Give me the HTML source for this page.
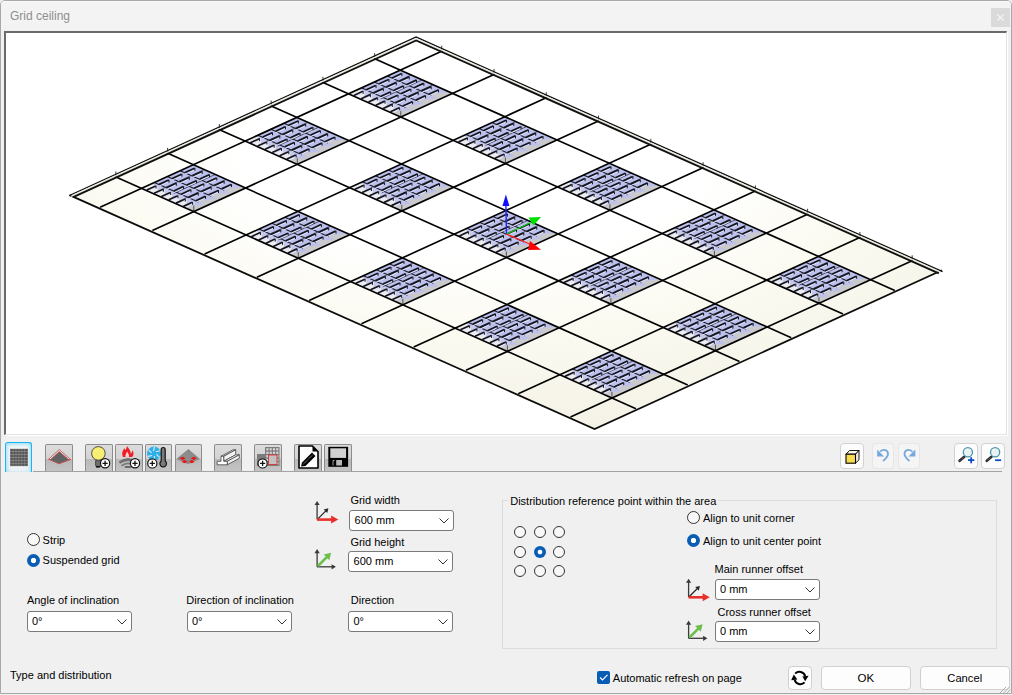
<!DOCTYPE html><html><head><meta charset="utf-8"><style>
html,body{margin:0;padding:0;width:1012px;height:695px;overflow:hidden;background:#f0f0f0;position:relative;font-family:"Liberation Sans",sans-serif}
.t{position:absolute;white-space:nowrap}
#win{position:absolute;left:0;top:0;width:1010px;height:692px;border:1px solid #a8a8a8;border-radius:5px 5px 0 0;background:#f0f0f0}
#title{position:absolute;left:1px;top:1px;width:1010px;height:29px;background:#f3f3f3;border-radius:4px 4px 0 0;border-top:1px solid #fbfbfb;box-sizing:border-box}
#closeb{position:absolute;left:991px;top:8px;width:19px;height:19px;background:#dadada}
#vp{position:absolute;left:4px;top:31px;width:1000px;height:401px;background:#fff;border-top:2px solid #6a6a6a;border-left:2px solid #6a6a6a;border-right:1px solid #e3e3e3;border-bottom:1px solid #e3e3e3;box-shadow:1px 1px 0 #fff}
#tbline{position:absolute;left:33px;top:471px;width:969px;height:1px;background:#a3a3a3}
.tab{position:absolute;left:5px;top:442px;width:24.5px;height:29px;border:1.6px solid #1ab4f0;border-bottom:none;border-radius:3px 3px 0 0;background:linear-gradient(#f4f8fa,#eef2f4);box-shadow:inset 2px 2px 3px rgba(80,200,245,0.35),inset -2px 0 3px rgba(80,200,245,0.35)}
.tbtn{position:absolute;top:444px;height:26px;border:1px solid #8c8c8c;border-bottom:none;border-radius:2px 2px 0 0;background:linear-gradient(#dcdcdc 0,#d3d3d3 52%,#b8b8b8 53%,#c4c4c4 100%)}
.rbtn{position:absolute;top:443px;height:24px;border:1px solid #d2d2d2;border-radius:4px;background:#fcfcfc}
.rbtn.faded{border-color:#e6e6e6;background:#f5f5f5}
.rad{position:absolute;border:1px solid #333;border-radius:50%;background:#f8f8f8;box-sizing:content-box}
.rad.on{border:none;background:radial-gradient(circle,#fff 0,#fff 2.6px,#0a5db5 3.2px)}
.combo{position:absolute;border:1px solid #7a7a7a;border-radius:3px;background:#fff}
#grp{position:absolute;left:502px;top:500px;width:493px;height:147px;border:1px solid #dcdcdc}
#grplegend{position:absolute;left:508px;top:496px;width:210px;height:8px;background:#f0f0f0}
#chk{position:absolute;left:597px;top:671px;width:13px;height:13px;background:#0a5db5;border-radius:2px}
.pbtn{position:absolute;top:666px;height:22px;border:1px solid #d0d0d0;border-radius:4px;background:#fdfdfd}
</style></head><body><div id="win"></div><div id="title"></div><div class="t" style="left:10.00px;top:8.64px;font-size:12px;line-height:15px;color:#8e8e8e;">Grid ceiling</div><div id="closeb"><svg width="19" height="19" style="position:absolute;left:0;top:0"><path d="M6.3 6.3 L12.7 12.7 M12.7 6.3 L6.3 12.7" stroke="#f6f6f6" stroke-width="1.2"/></svg></div><div id="vp"></div><svg width="1012" height="695" viewBox="0 0 1012 695" style="position:absolute;left:0;top:0"><defs><radialGradient id="fillg" gradientUnits="userSpaceOnUse" cx="2.5" cy="1.0" r="8.6"><stop offset="0" stop-color="#ffffff"/><stop offset="0.36" stop-color="#ffffff"/><stop offset="0.64" stop-color="#fbfaf1"/><stop offset="1" stop-color="#f4f2e6"/></radialGradient></defs><g transform="matrix(52.27,23.29,-51.76,23.66,400.3,70.1)"><polygon points="-0.56,-0.87 9.51,-0.87 9.51,5.85 -0.56,5.85" fill="url(#fillg)"/></g><polygon points="400.30,70.10 452.57,93.39 400.81,117.05 348.54,93.76" fill="#bcc0ec"/><polygon points="358.89,89.03 411.16,112.32 400.81,117.05 348.54,93.76" fill="#ededed"/><polygon points="364.53,91.54 370.02,93.98 364.32,96.59" fill="#c4c7ef"/><polygon points="371.84,94.80 377.33,97.24 371.64,99.85" fill="#c4c7ef"/><polygon points="379.16,98.06 384.65,100.51 378.96,103.11" fill="#c4c7ef"/><polygon points="386.48,101.32 391.97,103.77 386.27,106.37" fill="#c4c7ef"/><polygon points="393.80,104.58 399.29,107.03 393.59,109.63" fill="#c4c7ef"/><polygon points="401.12,107.84 406.60,110.29 400.91,112.89" fill="#c4c7ef"/><polygon points="444.21,89.66 452.57,93.39 400.81,117.05 392.45,113.32" fill="#cacacc"/><polygon points="443.95,89.55 435.15,93.57 449.96,92.23" fill="#bcc0ec"/><polygon points="431.01,95.46 422.21,99.48 437.02,98.14" fill="#bcc0ec"/><polygon points="418.07,101.38 409.27,105.40 424.08,104.06" fill="#bcc0ec"/><polygon points="405.13,107.29 396.33,111.31 411.14,109.97" fill="#bcc0ec"/><line x1="387.36" y1="76.02" x2="431.27" y2="95.58" stroke="#1e1e28" stroke-width="1.1"/><line x1="374.42" y1="81.93" x2="418.33" y2="101.49" stroke="#1e1e28" stroke-width="1.1"/><line x1="361.48" y1="87.84" x2="405.39" y2="107.41" stroke="#1e1e28" stroke-width="1.1"/><line x1="411.28" y1="74.99" x2="369.87" y2="93.92" stroke="#2a2a36" stroke-width="0.7"/><line x1="422.25" y1="79.88" x2="380.85" y2="98.81" stroke="#2a2a36" stroke-width="0.7"/><line x1="433.23" y1="84.77" x2="391.82" y2="103.70" stroke="#2a2a36" stroke-width="0.7"/><line x1="401.60" y1="75.10" x2="392.16" y2="79.42" stroke="#e2e5ff" stroke-width="1.1"/><line x1="401.60" y1="73.60" x2="392.16" y2="77.92" stroke="#14141c" stroke-width="1.7"/><line x1="401.90" y1="73.20" x2="401.90" y2="76.10" stroke="#14141c" stroke-width="1.0"/><line x1="388.66" y1="81.02" x2="379.22" y2="85.33" stroke="#e2e5ff" stroke-width="1.1"/><line x1="388.66" y1="79.52" x2="379.22" y2="83.83" stroke="#14141c" stroke-width="1.7"/><line x1="388.96" y1="79.12" x2="388.96" y2="82.02" stroke="#14141c" stroke-width="1.0"/><line x1="375.72" y1="86.93" x2="366.28" y2="91.25" stroke="#e2e5ff" stroke-width="1.1"/><line x1="375.72" y1="85.43" x2="366.28" y2="89.75" stroke="#14141c" stroke-width="1.7"/><line x1="376.02" y1="85.03" x2="376.02" y2="87.93" stroke="#14141c" stroke-width="1.0"/><line x1="362.78" y1="92.85" x2="353.85" y2="96.93" stroke="#e2e5ff" stroke-width="1.1"/><line x1="362.78" y1="91.35" x2="353.85" y2="95.43" stroke="#14141c" stroke-width="1.7"/><line x1="363.08" y1="90.95" x2="363.08" y2="93.85" stroke="#14141c" stroke-width="1.0"/><line x1="408.92" y1="78.36" x2="399.47" y2="82.68" stroke="#e2e5ff" stroke-width="1.1"/><line x1="408.92" y1="76.86" x2="399.47" y2="81.18" stroke="#14141c" stroke-width="1.7"/><line x1="409.22" y1="76.46" x2="409.22" y2="79.36" stroke="#14141c" stroke-width="1.0"/><line x1="395.98" y1="84.28" x2="386.53" y2="88.59" stroke="#e2e5ff" stroke-width="1.1"/><line x1="395.98" y1="82.78" x2="386.53" y2="87.09" stroke="#14141c" stroke-width="1.7"/><line x1="396.28" y1="82.38" x2="396.28" y2="85.28" stroke="#14141c" stroke-width="1.0"/><line x1="383.04" y1="90.19" x2="373.59" y2="94.51" stroke="#e2e5ff" stroke-width="1.1"/><line x1="383.04" y1="88.69" x2="373.59" y2="93.01" stroke="#14141c" stroke-width="1.7"/><line x1="383.34" y1="88.29" x2="383.34" y2="91.19" stroke="#14141c" stroke-width="1.0"/><line x1="370.10" y1="96.11" x2="361.17" y2="100.19" stroke="#e2e5ff" stroke-width="1.1"/><line x1="370.10" y1="94.61" x2="361.17" y2="98.69" stroke="#14141c" stroke-width="1.7"/><line x1="370.40" y1="94.21" x2="370.40" y2="97.11" stroke="#14141c" stroke-width="1.0"/><line x1="416.24" y1="81.62" x2="406.79" y2="85.94" stroke="#e2e5ff" stroke-width="1.1"/><line x1="416.24" y1="80.12" x2="406.79" y2="84.44" stroke="#14141c" stroke-width="1.7"/><line x1="416.54" y1="79.72" x2="416.54" y2="82.62" stroke="#14141c" stroke-width="1.0"/><line x1="403.30" y1="87.54" x2="393.85" y2="91.85" stroke="#e2e5ff" stroke-width="1.1"/><line x1="403.30" y1="86.04" x2="393.85" y2="90.35" stroke="#14141c" stroke-width="1.7"/><line x1="403.60" y1="85.64" x2="403.60" y2="88.54" stroke="#14141c" stroke-width="1.0"/><line x1="390.36" y1="93.45" x2="380.91" y2="97.77" stroke="#e2e5ff" stroke-width="1.1"/><line x1="390.36" y1="91.95" x2="380.91" y2="96.27" stroke="#14141c" stroke-width="1.7"/><line x1="390.66" y1="91.55" x2="390.66" y2="94.45" stroke="#14141c" stroke-width="1.0"/><line x1="377.42" y1="99.37" x2="368.49" y2="103.45" stroke="#e2e5ff" stroke-width="1.1"/><line x1="377.42" y1="97.87" x2="368.49" y2="101.95" stroke="#14141c" stroke-width="1.7"/><line x1="377.72" y1="97.47" x2="377.72" y2="100.37" stroke="#14141c" stroke-width="1.0"/><line x1="423.56" y1="84.88" x2="414.11" y2="89.20" stroke="#e2e5ff" stroke-width="1.1"/><line x1="423.56" y1="83.38" x2="414.11" y2="87.70" stroke="#14141c" stroke-width="1.7"/><line x1="423.86" y1="82.98" x2="423.86" y2="85.88" stroke="#14141c" stroke-width="1.0"/><line x1="410.62" y1="90.80" x2="401.17" y2="95.12" stroke="#e2e5ff" stroke-width="1.1"/><line x1="410.62" y1="89.30" x2="401.17" y2="93.62" stroke="#14141c" stroke-width="1.7"/><line x1="410.92" y1="88.90" x2="410.92" y2="91.80" stroke="#14141c" stroke-width="1.0"/><line x1="397.68" y1="96.71" x2="388.23" y2="101.03" stroke="#e2e5ff" stroke-width="1.1"/><line x1="397.68" y1="95.21" x2="388.23" y2="99.53" stroke="#14141c" stroke-width="1.7"/><line x1="397.98" y1="94.81" x2="397.98" y2="97.71" stroke="#14141c" stroke-width="1.0"/><line x1="384.74" y1="102.63" x2="375.81" y2="106.71" stroke="#e2e5ff" stroke-width="1.1"/><line x1="384.74" y1="101.13" x2="375.81" y2="105.21" stroke="#14141c" stroke-width="1.7"/><line x1="385.04" y1="100.73" x2="385.04" y2="103.63" stroke="#14141c" stroke-width="1.0"/><line x1="430.87" y1="88.14" x2="421.43" y2="92.46" stroke="#e2e5ff" stroke-width="1.1"/><line x1="430.87" y1="86.64" x2="421.43" y2="90.96" stroke="#14141c" stroke-width="1.7"/><line x1="431.17" y1="86.24" x2="431.17" y2="89.14" stroke="#14141c" stroke-width="1.0"/><line x1="417.93" y1="94.06" x2="408.49" y2="98.38" stroke="#e2e5ff" stroke-width="1.1"/><line x1="417.93" y1="92.56" x2="408.49" y2="96.88" stroke="#14141c" stroke-width="1.7"/><line x1="418.23" y1="92.16" x2="418.23" y2="95.06" stroke="#14141c" stroke-width="1.0"/><line x1="404.99" y1="99.97" x2="395.55" y2="104.29" stroke="#e2e5ff" stroke-width="1.1"/><line x1="404.99" y1="98.47" x2="395.55" y2="102.79" stroke="#14141c" stroke-width="1.7"/><line x1="405.29" y1="98.07" x2="405.29" y2="100.97" stroke="#14141c" stroke-width="1.0"/><line x1="392.05" y1="105.89" x2="383.12" y2="109.97" stroke="#e2e5ff" stroke-width="1.1"/><line x1="392.05" y1="104.39" x2="383.12" y2="108.47" stroke="#14141c" stroke-width="1.7"/><line x1="392.35" y1="103.99" x2="392.35" y2="106.89" stroke="#14141c" stroke-width="1.0"/><line x1="438.19" y1="91.40" x2="428.74" y2="95.72" stroke="#e2e5ff" stroke-width="1.1"/><line x1="438.19" y1="89.90" x2="428.74" y2="94.22" stroke="#14141c" stroke-width="1.7"/><line x1="438.49" y1="89.50" x2="438.49" y2="92.40" stroke="#14141c" stroke-width="1.0"/><line x1="425.25" y1="97.32" x2="415.80" y2="101.64" stroke="#e2e5ff" stroke-width="1.1"/><line x1="425.25" y1="95.82" x2="415.80" y2="100.14" stroke="#14141c" stroke-width="1.7"/><line x1="425.55" y1="95.42" x2="425.55" y2="98.32" stroke="#14141c" stroke-width="1.0"/><line x1="412.31" y1="103.23" x2="402.86" y2="107.55" stroke="#e2e5ff" stroke-width="1.1"/><line x1="412.31" y1="101.73" x2="402.86" y2="106.05" stroke="#14141c" stroke-width="1.7"/><line x1="412.61" y1="101.33" x2="412.61" y2="104.23" stroke="#14141c" stroke-width="1.0"/><line x1="399.37" y1="109.15" x2="390.44" y2="113.23" stroke="#e2e5ff" stroke-width="1.1"/><line x1="399.37" y1="107.65" x2="390.44" y2="111.73" stroke="#14141c" stroke-width="1.7"/><line x1="399.67" y1="107.25" x2="399.67" y2="110.15" stroke="#14141c" stroke-width="1.0"/><line x1="400.81" y1="117.05" x2="400.81" y2="111.05" stroke="#444" stroke-width="0.9"/><polygon points="296.78,117.42 349.05,140.71 297.29,164.37 245.02,141.08" fill="#bcc0ec"/><polygon points="255.37,136.35 307.64,159.64 297.29,164.37 245.02,141.08" fill="#ededed"/><polygon points="261.01,138.86 266.50,141.30 260.80,143.91" fill="#c4c7ef"/><polygon points="268.32,142.12 273.81,144.56 268.12,147.17" fill="#c4c7ef"/><polygon points="275.64,145.38 281.13,147.83 275.44,150.43" fill="#c4c7ef"/><polygon points="282.96,148.64 288.45,151.09 282.75,153.69" fill="#c4c7ef"/><polygon points="290.28,151.90 295.77,154.35 290.07,156.95" fill="#c4c7ef"/><polygon points="297.60,155.16 303.08,157.61 297.39,160.21" fill="#c4c7ef"/><polygon points="340.69,136.98 349.05,140.71 297.29,164.37 288.93,160.64" fill="#cacacc"/><polygon points="340.43,136.87 331.63,140.89 346.44,139.55" fill="#bcc0ec"/><polygon points="327.49,142.78 318.69,146.80 333.50,145.46" fill="#bcc0ec"/><polygon points="314.55,148.70 305.75,152.72 320.56,151.38" fill="#bcc0ec"/><polygon points="301.61,154.61 292.81,158.63 307.62,157.29" fill="#bcc0ec"/><line x1="283.84" y1="123.33" x2="327.75" y2="142.90" stroke="#1e1e28" stroke-width="1.1"/><line x1="270.90" y1="129.25" x2="314.81" y2="148.81" stroke="#1e1e28" stroke-width="1.1"/><line x1="257.96" y1="135.16" x2="301.87" y2="154.73" stroke="#1e1e28" stroke-width="1.1"/><line x1="307.76" y1="122.31" x2="266.35" y2="141.24" stroke="#2a2a36" stroke-width="0.7"/><line x1="318.73" y1="127.20" x2="277.33" y2="146.13" stroke="#2a2a36" stroke-width="0.7"/><line x1="329.71" y1="132.09" x2="288.30" y2="151.02" stroke="#2a2a36" stroke-width="0.7"/><line x1="298.08" y1="122.42" x2="288.64" y2="126.74" stroke="#e2e5ff" stroke-width="1.1"/><line x1="298.08" y1="120.92" x2="288.64" y2="125.24" stroke="#14141c" stroke-width="1.7"/><line x1="298.38" y1="120.52" x2="298.38" y2="123.42" stroke="#14141c" stroke-width="1.0"/><line x1="285.14" y1="128.34" x2="275.70" y2="132.65" stroke="#e2e5ff" stroke-width="1.1"/><line x1="285.14" y1="126.84" x2="275.70" y2="131.15" stroke="#14141c" stroke-width="1.7"/><line x1="285.44" y1="126.44" x2="285.44" y2="129.34" stroke="#14141c" stroke-width="1.0"/><line x1="272.20" y1="134.25" x2="262.76" y2="138.57" stroke="#e2e5ff" stroke-width="1.1"/><line x1="272.20" y1="132.75" x2="262.76" y2="137.07" stroke="#14141c" stroke-width="1.7"/><line x1="272.50" y1="132.35" x2="272.50" y2="135.25" stroke="#14141c" stroke-width="1.0"/><line x1="259.26" y1="140.17" x2="250.33" y2="144.25" stroke="#e2e5ff" stroke-width="1.1"/><line x1="259.26" y1="138.67" x2="250.33" y2="142.75" stroke="#14141c" stroke-width="1.7"/><line x1="259.56" y1="138.27" x2="259.56" y2="141.17" stroke="#14141c" stroke-width="1.0"/><line x1="305.40" y1="125.68" x2="295.95" y2="130.00" stroke="#e2e5ff" stroke-width="1.1"/><line x1="305.40" y1="124.18" x2="295.95" y2="128.50" stroke="#14141c" stroke-width="1.7"/><line x1="305.70" y1="123.78" x2="305.70" y2="126.68" stroke="#14141c" stroke-width="1.0"/><line x1="292.46" y1="131.60" x2="283.01" y2="135.91" stroke="#e2e5ff" stroke-width="1.1"/><line x1="292.46" y1="130.10" x2="283.01" y2="134.41" stroke="#14141c" stroke-width="1.7"/><line x1="292.76" y1="129.70" x2="292.76" y2="132.60" stroke="#14141c" stroke-width="1.0"/><line x1="279.52" y1="137.51" x2="270.07" y2="141.83" stroke="#e2e5ff" stroke-width="1.1"/><line x1="279.52" y1="136.01" x2="270.07" y2="140.33" stroke="#14141c" stroke-width="1.7"/><line x1="279.82" y1="135.61" x2="279.82" y2="138.51" stroke="#14141c" stroke-width="1.0"/><line x1="266.58" y1="143.43" x2="257.65" y2="147.51" stroke="#e2e5ff" stroke-width="1.1"/><line x1="266.58" y1="141.93" x2="257.65" y2="146.01" stroke="#14141c" stroke-width="1.7"/><line x1="266.88" y1="141.53" x2="266.88" y2="144.43" stroke="#14141c" stroke-width="1.0"/><line x1="312.72" y1="128.94" x2="303.27" y2="133.26" stroke="#e2e5ff" stroke-width="1.1"/><line x1="312.72" y1="127.44" x2="303.27" y2="131.76" stroke="#14141c" stroke-width="1.7"/><line x1="313.02" y1="127.04" x2="313.02" y2="129.94" stroke="#14141c" stroke-width="1.0"/><line x1="299.78" y1="134.86" x2="290.33" y2="139.17" stroke="#e2e5ff" stroke-width="1.1"/><line x1="299.78" y1="133.36" x2="290.33" y2="137.67" stroke="#14141c" stroke-width="1.7"/><line x1="300.08" y1="132.96" x2="300.08" y2="135.86" stroke="#14141c" stroke-width="1.0"/><line x1="286.84" y1="140.77" x2="277.39" y2="145.09" stroke="#e2e5ff" stroke-width="1.1"/><line x1="286.84" y1="139.27" x2="277.39" y2="143.59" stroke="#14141c" stroke-width="1.7"/><line x1="287.14" y1="138.87" x2="287.14" y2="141.77" stroke="#14141c" stroke-width="1.0"/><line x1="273.90" y1="146.69" x2="264.97" y2="150.77" stroke="#e2e5ff" stroke-width="1.1"/><line x1="273.90" y1="145.19" x2="264.97" y2="149.27" stroke="#14141c" stroke-width="1.7"/><line x1="274.20" y1="144.79" x2="274.20" y2="147.69" stroke="#14141c" stroke-width="1.0"/><line x1="320.04" y1="132.20" x2="310.59" y2="136.52" stroke="#e2e5ff" stroke-width="1.1"/><line x1="320.04" y1="130.70" x2="310.59" y2="135.02" stroke="#14141c" stroke-width="1.7"/><line x1="320.34" y1="130.30" x2="320.34" y2="133.20" stroke="#14141c" stroke-width="1.0"/><line x1="307.10" y1="138.12" x2="297.65" y2="142.44" stroke="#e2e5ff" stroke-width="1.1"/><line x1="307.10" y1="136.62" x2="297.65" y2="140.94" stroke="#14141c" stroke-width="1.7"/><line x1="307.40" y1="136.22" x2="307.40" y2="139.12" stroke="#14141c" stroke-width="1.0"/><line x1="294.16" y1="144.03" x2="284.71" y2="148.35" stroke="#e2e5ff" stroke-width="1.1"/><line x1="294.16" y1="142.53" x2="284.71" y2="146.85" stroke="#14141c" stroke-width="1.7"/><line x1="294.46" y1="142.13" x2="294.46" y2="145.03" stroke="#14141c" stroke-width="1.0"/><line x1="281.22" y1="149.95" x2="272.29" y2="154.03" stroke="#e2e5ff" stroke-width="1.1"/><line x1="281.22" y1="148.45" x2="272.29" y2="152.53" stroke="#14141c" stroke-width="1.7"/><line x1="281.52" y1="148.05" x2="281.52" y2="150.95" stroke="#14141c" stroke-width="1.0"/><line x1="327.35" y1="135.46" x2="317.91" y2="139.78" stroke="#e2e5ff" stroke-width="1.1"/><line x1="327.35" y1="133.96" x2="317.91" y2="138.28" stroke="#14141c" stroke-width="1.7"/><line x1="327.65" y1="133.56" x2="327.65" y2="136.46" stroke="#14141c" stroke-width="1.0"/><line x1="314.41" y1="141.38" x2="304.97" y2="145.70" stroke="#e2e5ff" stroke-width="1.1"/><line x1="314.41" y1="139.88" x2="304.97" y2="144.20" stroke="#14141c" stroke-width="1.7"/><line x1="314.71" y1="139.48" x2="314.71" y2="142.38" stroke="#14141c" stroke-width="1.0"/><line x1="301.47" y1="147.29" x2="292.03" y2="151.61" stroke="#e2e5ff" stroke-width="1.1"/><line x1="301.47" y1="145.79" x2="292.03" y2="150.11" stroke="#14141c" stroke-width="1.7"/><line x1="301.77" y1="145.39" x2="301.77" y2="148.29" stroke="#14141c" stroke-width="1.0"/><line x1="288.53" y1="153.21" x2="279.60" y2="157.29" stroke="#e2e5ff" stroke-width="1.1"/><line x1="288.53" y1="151.71" x2="279.60" y2="155.79" stroke="#14141c" stroke-width="1.7"/><line x1="288.83" y1="151.31" x2="288.83" y2="154.21" stroke="#14141c" stroke-width="1.0"/><line x1="334.67" y1="138.72" x2="325.22" y2="143.04" stroke="#e2e5ff" stroke-width="1.1"/><line x1="334.67" y1="137.22" x2="325.22" y2="141.54" stroke="#14141c" stroke-width="1.7"/><line x1="334.97" y1="136.82" x2="334.97" y2="139.72" stroke="#14141c" stroke-width="1.0"/><line x1="321.73" y1="144.64" x2="312.28" y2="148.96" stroke="#e2e5ff" stroke-width="1.1"/><line x1="321.73" y1="143.14" x2="312.28" y2="147.46" stroke="#14141c" stroke-width="1.7"/><line x1="322.03" y1="142.74" x2="322.03" y2="145.64" stroke="#14141c" stroke-width="1.0"/><line x1="308.79" y1="150.55" x2="299.34" y2="154.87" stroke="#e2e5ff" stroke-width="1.1"/><line x1="308.79" y1="149.05" x2="299.34" y2="153.37" stroke="#14141c" stroke-width="1.7"/><line x1="309.09" y1="148.65" x2="309.09" y2="151.55" stroke="#14141c" stroke-width="1.0"/><line x1="295.85" y1="156.47" x2="286.92" y2="160.55" stroke="#e2e5ff" stroke-width="1.1"/><line x1="295.85" y1="154.97" x2="286.92" y2="159.05" stroke="#14141c" stroke-width="1.7"/><line x1="296.15" y1="154.57" x2="296.15" y2="157.47" stroke="#14141c" stroke-width="1.0"/><line x1="297.29" y1="164.37" x2="297.29" y2="158.37" stroke="#444" stroke-width="0.9"/><polygon points="193.26,164.74 245.53,188.03 193.77,211.69 141.50,188.40" fill="#bcc0ec"/><polygon points="151.85,183.67 204.12,206.96 193.77,211.69 141.50,188.40" fill="#ededed"/><polygon points="157.49,186.18 162.98,188.62 157.28,191.23" fill="#c4c7ef"/><polygon points="164.80,189.44 170.29,191.88 164.60,194.49" fill="#c4c7ef"/><polygon points="172.12,192.70 177.61,195.15 171.92,197.75" fill="#c4c7ef"/><polygon points="179.44,195.96 184.93,198.41 179.23,201.01" fill="#c4c7ef"/><polygon points="186.76,199.22 192.25,201.67 186.55,204.27" fill="#c4c7ef"/><polygon points="194.08,202.48 199.56,204.93 193.87,207.53" fill="#c4c7ef"/><polygon points="237.17,184.30 245.53,188.03 193.77,211.69 185.41,207.96" fill="#cacacc"/><polygon points="236.91,184.19 228.11,188.21 242.92,186.87" fill="#bcc0ec"/><polygon points="223.97,190.10 215.17,194.12 229.98,192.78" fill="#bcc0ec"/><polygon points="211.03,196.02 202.23,200.04 217.04,198.70" fill="#bcc0ec"/><polygon points="198.09,201.93 189.29,205.95 204.10,204.61" fill="#bcc0ec"/><line x1="180.32" y1="170.66" x2="224.23" y2="190.22" stroke="#1e1e28" stroke-width="1.1"/><line x1="167.38" y1="176.57" x2="211.29" y2="196.13" stroke="#1e1e28" stroke-width="1.1"/><line x1="154.44" y1="182.49" x2="198.35" y2="202.05" stroke="#1e1e28" stroke-width="1.1"/><line x1="204.24" y1="169.63" x2="162.83" y2="188.56" stroke="#2a2a36" stroke-width="0.7"/><line x1="215.21" y1="174.52" x2="173.81" y2="193.45" stroke="#2a2a36" stroke-width="0.7"/><line x1="226.19" y1="179.41" x2="184.78" y2="198.34" stroke="#2a2a36" stroke-width="0.7"/><line x1="194.56" y1="169.74" x2="185.12" y2="174.06" stroke="#e2e5ff" stroke-width="1.1"/><line x1="194.56" y1="168.24" x2="185.12" y2="172.56" stroke="#14141c" stroke-width="1.7"/><line x1="194.86" y1="167.84" x2="194.86" y2="170.74" stroke="#14141c" stroke-width="1.0"/><line x1="181.62" y1="175.66" x2="172.18" y2="179.97" stroke="#e2e5ff" stroke-width="1.1"/><line x1="181.62" y1="174.16" x2="172.18" y2="178.47" stroke="#14141c" stroke-width="1.7"/><line x1="181.92" y1="173.76" x2="181.92" y2="176.66" stroke="#14141c" stroke-width="1.0"/><line x1="168.68" y1="181.57" x2="159.24" y2="185.89" stroke="#e2e5ff" stroke-width="1.1"/><line x1="168.68" y1="180.07" x2="159.24" y2="184.39" stroke="#14141c" stroke-width="1.7"/><line x1="168.98" y1="179.67" x2="168.98" y2="182.57" stroke="#14141c" stroke-width="1.0"/><line x1="155.74" y1="187.49" x2="146.81" y2="191.57" stroke="#e2e5ff" stroke-width="1.1"/><line x1="155.74" y1="185.99" x2="146.81" y2="190.07" stroke="#14141c" stroke-width="1.7"/><line x1="156.04" y1="185.59" x2="156.04" y2="188.49" stroke="#14141c" stroke-width="1.0"/><line x1="201.88" y1="173.00" x2="192.43" y2="177.32" stroke="#e2e5ff" stroke-width="1.1"/><line x1="201.88" y1="171.50" x2="192.43" y2="175.82" stroke="#14141c" stroke-width="1.7"/><line x1="202.18" y1="171.10" x2="202.18" y2="174.00" stroke="#14141c" stroke-width="1.0"/><line x1="188.94" y1="178.92" x2="179.49" y2="183.23" stroke="#e2e5ff" stroke-width="1.1"/><line x1="188.94" y1="177.42" x2="179.49" y2="181.73" stroke="#14141c" stroke-width="1.7"/><line x1="189.24" y1="177.02" x2="189.24" y2="179.92" stroke="#14141c" stroke-width="1.0"/><line x1="176.00" y1="184.83" x2="166.55" y2="189.15" stroke="#e2e5ff" stroke-width="1.1"/><line x1="176.00" y1="183.33" x2="166.55" y2="187.65" stroke="#14141c" stroke-width="1.7"/><line x1="176.30" y1="182.93" x2="176.30" y2="185.83" stroke="#14141c" stroke-width="1.0"/><line x1="163.06" y1="190.75" x2="154.13" y2="194.83" stroke="#e2e5ff" stroke-width="1.1"/><line x1="163.06" y1="189.25" x2="154.13" y2="193.33" stroke="#14141c" stroke-width="1.7"/><line x1="163.36" y1="188.85" x2="163.36" y2="191.75" stroke="#14141c" stroke-width="1.0"/><line x1="209.20" y1="176.26" x2="199.75" y2="180.58" stroke="#e2e5ff" stroke-width="1.1"/><line x1="209.20" y1="174.76" x2="199.75" y2="179.08" stroke="#14141c" stroke-width="1.7"/><line x1="209.50" y1="174.36" x2="209.50" y2="177.26" stroke="#14141c" stroke-width="1.0"/><line x1="196.26" y1="182.18" x2="186.81" y2="186.49" stroke="#e2e5ff" stroke-width="1.1"/><line x1="196.26" y1="180.68" x2="186.81" y2="184.99" stroke="#14141c" stroke-width="1.7"/><line x1="196.56" y1="180.28" x2="196.56" y2="183.18" stroke="#14141c" stroke-width="1.0"/><line x1="183.32" y1="188.09" x2="173.87" y2="192.41" stroke="#e2e5ff" stroke-width="1.1"/><line x1="183.32" y1="186.59" x2="173.87" y2="190.91" stroke="#14141c" stroke-width="1.7"/><line x1="183.62" y1="186.19" x2="183.62" y2="189.09" stroke="#14141c" stroke-width="1.0"/><line x1="170.38" y1="194.01" x2="161.45" y2="198.09" stroke="#e2e5ff" stroke-width="1.1"/><line x1="170.38" y1="192.51" x2="161.45" y2="196.59" stroke="#14141c" stroke-width="1.7"/><line x1="170.68" y1="192.11" x2="170.68" y2="195.01" stroke="#14141c" stroke-width="1.0"/><line x1="216.52" y1="179.52" x2="207.07" y2="183.84" stroke="#e2e5ff" stroke-width="1.1"/><line x1="216.52" y1="178.02" x2="207.07" y2="182.34" stroke="#14141c" stroke-width="1.7"/><line x1="216.82" y1="177.62" x2="216.82" y2="180.52" stroke="#14141c" stroke-width="1.0"/><line x1="203.58" y1="185.44" x2="194.13" y2="189.76" stroke="#e2e5ff" stroke-width="1.1"/><line x1="203.58" y1="183.94" x2="194.13" y2="188.26" stroke="#14141c" stroke-width="1.7"/><line x1="203.88" y1="183.54" x2="203.88" y2="186.44" stroke="#14141c" stroke-width="1.0"/><line x1="190.64" y1="191.35" x2="181.19" y2="195.67" stroke="#e2e5ff" stroke-width="1.1"/><line x1="190.64" y1="189.85" x2="181.19" y2="194.17" stroke="#14141c" stroke-width="1.7"/><line x1="190.94" y1="189.45" x2="190.94" y2="192.35" stroke="#14141c" stroke-width="1.0"/><line x1="177.70" y1="197.27" x2="168.77" y2="201.35" stroke="#e2e5ff" stroke-width="1.1"/><line x1="177.70" y1="195.77" x2="168.77" y2="199.85" stroke="#14141c" stroke-width="1.7"/><line x1="178.00" y1="195.37" x2="178.00" y2="198.27" stroke="#14141c" stroke-width="1.0"/><line x1="223.83" y1="182.78" x2="214.39" y2="187.10" stroke="#e2e5ff" stroke-width="1.1"/><line x1="223.83" y1="181.28" x2="214.39" y2="185.60" stroke="#14141c" stroke-width="1.7"/><line x1="224.13" y1="180.88" x2="224.13" y2="183.78" stroke="#14141c" stroke-width="1.0"/><line x1="210.89" y1="188.70" x2="201.45" y2="193.02" stroke="#e2e5ff" stroke-width="1.1"/><line x1="210.89" y1="187.20" x2="201.45" y2="191.52" stroke="#14141c" stroke-width="1.7"/><line x1="211.19" y1="186.80" x2="211.19" y2="189.70" stroke="#14141c" stroke-width="1.0"/><line x1="197.95" y1="194.61" x2="188.51" y2="198.93" stroke="#e2e5ff" stroke-width="1.1"/><line x1="197.95" y1="193.11" x2="188.51" y2="197.43" stroke="#14141c" stroke-width="1.7"/><line x1="198.25" y1="192.71" x2="198.25" y2="195.61" stroke="#14141c" stroke-width="1.0"/><line x1="185.01" y1="200.53" x2="176.08" y2="204.61" stroke="#e2e5ff" stroke-width="1.1"/><line x1="185.01" y1="199.03" x2="176.08" y2="203.11" stroke="#14141c" stroke-width="1.7"/><line x1="185.31" y1="198.63" x2="185.31" y2="201.53" stroke="#14141c" stroke-width="1.0"/><line x1="231.15" y1="186.04" x2="221.70" y2="190.36" stroke="#e2e5ff" stroke-width="1.1"/><line x1="231.15" y1="184.54" x2="221.70" y2="188.86" stroke="#14141c" stroke-width="1.7"/><line x1="231.45" y1="184.14" x2="231.45" y2="187.04" stroke="#14141c" stroke-width="1.0"/><line x1="218.21" y1="191.96" x2="208.76" y2="196.28" stroke="#e2e5ff" stroke-width="1.1"/><line x1="218.21" y1="190.46" x2="208.76" y2="194.78" stroke="#14141c" stroke-width="1.7"/><line x1="218.51" y1="190.06" x2="218.51" y2="192.96" stroke="#14141c" stroke-width="1.0"/><line x1="205.27" y1="197.87" x2="195.82" y2="202.19" stroke="#e2e5ff" stroke-width="1.1"/><line x1="205.27" y1="196.37" x2="195.82" y2="200.69" stroke="#14141c" stroke-width="1.7"/><line x1="205.57" y1="195.97" x2="205.57" y2="198.87" stroke="#14141c" stroke-width="1.0"/><line x1="192.33" y1="203.79" x2="183.40" y2="207.87" stroke="#e2e5ff" stroke-width="1.1"/><line x1="192.33" y1="202.29" x2="183.40" y2="206.37" stroke="#14141c" stroke-width="1.7"/><line x1="192.63" y1="201.89" x2="192.63" y2="204.79" stroke="#14141c" stroke-width="1.0"/><line x1="193.77" y1="211.69" x2="193.77" y2="205.69" stroke="#444" stroke-width="0.9"/><polygon points="504.84,116.68 557.11,139.97 505.35,163.63 453.08,140.34" fill="#bcc0ec"/><polygon points="463.43,135.61 515.70,158.90 505.35,163.63 453.08,140.34" fill="#ededed"/><polygon points="469.07,138.12 474.56,140.56 468.86,143.17" fill="#c4c7ef"/><polygon points="476.38,141.38 481.87,143.82 476.18,146.43" fill="#c4c7ef"/><polygon points="483.70,144.64 489.19,147.09 483.50,149.69" fill="#c4c7ef"/><polygon points="491.02,147.90 496.51,150.35 490.81,152.95" fill="#c4c7ef"/><polygon points="498.34,151.16 503.83,153.61 498.13,156.21" fill="#c4c7ef"/><polygon points="505.66,154.42 511.14,156.87 505.45,159.47" fill="#c4c7ef"/><polygon points="548.75,136.24 557.11,139.97 505.35,163.63 496.99,159.90" fill="#cacacc"/><polygon points="548.49,136.13 539.69,140.15 554.50,138.81" fill="#bcc0ec"/><polygon points="535.55,142.04 526.75,146.06 541.56,144.72" fill="#bcc0ec"/><polygon points="522.61,147.96 513.81,151.98 528.62,150.64" fill="#bcc0ec"/><polygon points="509.67,153.87 500.87,157.89 515.68,156.55" fill="#bcc0ec"/><line x1="491.90" y1="122.59" x2="535.81" y2="142.16" stroke="#1e1e28" stroke-width="1.1"/><line x1="478.96" y1="128.51" x2="522.87" y2="148.07" stroke="#1e1e28" stroke-width="1.1"/><line x1="466.02" y1="134.42" x2="509.93" y2="153.99" stroke="#1e1e28" stroke-width="1.1"/><line x1="515.82" y1="121.57" x2="474.41" y2="140.50" stroke="#2a2a36" stroke-width="0.7"/><line x1="526.79" y1="126.46" x2="485.39" y2="145.39" stroke="#2a2a36" stroke-width="0.7"/><line x1="537.77" y1="131.35" x2="496.36" y2="150.28" stroke="#2a2a36" stroke-width="0.7"/><line x1="506.14" y1="121.68" x2="496.70" y2="126.00" stroke="#e2e5ff" stroke-width="1.1"/><line x1="506.14" y1="120.18" x2="496.70" y2="124.50" stroke="#14141c" stroke-width="1.7"/><line x1="506.44" y1="119.78" x2="506.44" y2="122.68" stroke="#14141c" stroke-width="1.0"/><line x1="493.20" y1="127.60" x2="483.76" y2="131.91" stroke="#e2e5ff" stroke-width="1.1"/><line x1="493.20" y1="126.10" x2="483.76" y2="130.41" stroke="#14141c" stroke-width="1.7"/><line x1="493.50" y1="125.70" x2="493.50" y2="128.60" stroke="#14141c" stroke-width="1.0"/><line x1="480.26" y1="133.51" x2="470.82" y2="137.83" stroke="#e2e5ff" stroke-width="1.1"/><line x1="480.26" y1="132.01" x2="470.82" y2="136.33" stroke="#14141c" stroke-width="1.7"/><line x1="480.56" y1="131.61" x2="480.56" y2="134.51" stroke="#14141c" stroke-width="1.0"/><line x1="467.32" y1="139.43" x2="458.39" y2="143.51" stroke="#e2e5ff" stroke-width="1.1"/><line x1="467.32" y1="137.93" x2="458.39" y2="142.01" stroke="#14141c" stroke-width="1.7"/><line x1="467.62" y1="137.53" x2="467.62" y2="140.43" stroke="#14141c" stroke-width="1.0"/><line x1="513.46" y1="124.94" x2="504.01" y2="129.26" stroke="#e2e5ff" stroke-width="1.1"/><line x1="513.46" y1="123.44" x2="504.01" y2="127.76" stroke="#14141c" stroke-width="1.7"/><line x1="513.76" y1="123.04" x2="513.76" y2="125.94" stroke="#14141c" stroke-width="1.0"/><line x1="500.52" y1="130.86" x2="491.07" y2="135.17" stroke="#e2e5ff" stroke-width="1.1"/><line x1="500.52" y1="129.36" x2="491.07" y2="133.67" stroke="#14141c" stroke-width="1.7"/><line x1="500.82" y1="128.96" x2="500.82" y2="131.86" stroke="#14141c" stroke-width="1.0"/><line x1="487.58" y1="136.77" x2="478.13" y2="141.09" stroke="#e2e5ff" stroke-width="1.1"/><line x1="487.58" y1="135.27" x2="478.13" y2="139.59" stroke="#14141c" stroke-width="1.7"/><line x1="487.88" y1="134.87" x2="487.88" y2="137.77" stroke="#14141c" stroke-width="1.0"/><line x1="474.64" y1="142.69" x2="465.71" y2="146.77" stroke="#e2e5ff" stroke-width="1.1"/><line x1="474.64" y1="141.19" x2="465.71" y2="145.27" stroke="#14141c" stroke-width="1.7"/><line x1="474.94" y1="140.79" x2="474.94" y2="143.69" stroke="#14141c" stroke-width="1.0"/><line x1="520.78" y1="128.20" x2="511.33" y2="132.52" stroke="#e2e5ff" stroke-width="1.1"/><line x1="520.78" y1="126.70" x2="511.33" y2="131.02" stroke="#14141c" stroke-width="1.7"/><line x1="521.08" y1="126.30" x2="521.08" y2="129.20" stroke="#14141c" stroke-width="1.0"/><line x1="507.84" y1="134.12" x2="498.39" y2="138.43" stroke="#e2e5ff" stroke-width="1.1"/><line x1="507.84" y1="132.62" x2="498.39" y2="136.93" stroke="#14141c" stroke-width="1.7"/><line x1="508.14" y1="132.22" x2="508.14" y2="135.12" stroke="#14141c" stroke-width="1.0"/><line x1="494.90" y1="140.03" x2="485.45" y2="144.35" stroke="#e2e5ff" stroke-width="1.1"/><line x1="494.90" y1="138.53" x2="485.45" y2="142.85" stroke="#14141c" stroke-width="1.7"/><line x1="495.20" y1="138.13" x2="495.20" y2="141.03" stroke="#14141c" stroke-width="1.0"/><line x1="481.96" y1="145.95" x2="473.03" y2="150.03" stroke="#e2e5ff" stroke-width="1.1"/><line x1="481.96" y1="144.45" x2="473.03" y2="148.53" stroke="#14141c" stroke-width="1.7"/><line x1="482.26" y1="144.05" x2="482.26" y2="146.95" stroke="#14141c" stroke-width="1.0"/><line x1="528.10" y1="131.46" x2="518.65" y2="135.78" stroke="#e2e5ff" stroke-width="1.1"/><line x1="528.10" y1="129.96" x2="518.65" y2="134.28" stroke="#14141c" stroke-width="1.7"/><line x1="528.40" y1="129.56" x2="528.40" y2="132.46" stroke="#14141c" stroke-width="1.0"/><line x1="515.16" y1="137.38" x2="505.71" y2="141.70" stroke="#e2e5ff" stroke-width="1.1"/><line x1="515.16" y1="135.88" x2="505.71" y2="140.20" stroke="#14141c" stroke-width="1.7"/><line x1="515.46" y1="135.48" x2="515.46" y2="138.38" stroke="#14141c" stroke-width="1.0"/><line x1="502.22" y1="143.29" x2="492.77" y2="147.61" stroke="#e2e5ff" stroke-width="1.1"/><line x1="502.22" y1="141.79" x2="492.77" y2="146.11" stroke="#14141c" stroke-width="1.7"/><line x1="502.52" y1="141.39" x2="502.52" y2="144.29" stroke="#14141c" stroke-width="1.0"/><line x1="489.28" y1="149.21" x2="480.35" y2="153.29" stroke="#e2e5ff" stroke-width="1.1"/><line x1="489.28" y1="147.71" x2="480.35" y2="151.79" stroke="#14141c" stroke-width="1.7"/><line x1="489.58" y1="147.31" x2="489.58" y2="150.21" stroke="#14141c" stroke-width="1.0"/><line x1="535.41" y1="134.72" x2="525.97" y2="139.04" stroke="#e2e5ff" stroke-width="1.1"/><line x1="535.41" y1="133.22" x2="525.97" y2="137.54" stroke="#14141c" stroke-width="1.7"/><line x1="535.71" y1="132.82" x2="535.71" y2="135.72" stroke="#14141c" stroke-width="1.0"/><line x1="522.47" y1="140.64" x2="513.03" y2="144.96" stroke="#e2e5ff" stroke-width="1.1"/><line x1="522.47" y1="139.14" x2="513.03" y2="143.46" stroke="#14141c" stroke-width="1.7"/><line x1="522.77" y1="138.74" x2="522.77" y2="141.64" stroke="#14141c" stroke-width="1.0"/><line x1="509.53" y1="146.55" x2="500.09" y2="150.87" stroke="#e2e5ff" stroke-width="1.1"/><line x1="509.53" y1="145.05" x2="500.09" y2="149.37" stroke="#14141c" stroke-width="1.7"/><line x1="509.83" y1="144.65" x2="509.83" y2="147.55" stroke="#14141c" stroke-width="1.0"/><line x1="496.59" y1="152.47" x2="487.66" y2="156.55" stroke="#e2e5ff" stroke-width="1.1"/><line x1="496.59" y1="150.97" x2="487.66" y2="155.05" stroke="#14141c" stroke-width="1.7"/><line x1="496.89" y1="150.57" x2="496.89" y2="153.47" stroke="#14141c" stroke-width="1.0"/><line x1="542.73" y1="137.98" x2="533.28" y2="142.30" stroke="#e2e5ff" stroke-width="1.1"/><line x1="542.73" y1="136.48" x2="533.28" y2="140.80" stroke="#14141c" stroke-width="1.7"/><line x1="543.03" y1="136.08" x2="543.03" y2="138.98" stroke="#14141c" stroke-width="1.0"/><line x1="529.79" y1="143.90" x2="520.34" y2="148.22" stroke="#e2e5ff" stroke-width="1.1"/><line x1="529.79" y1="142.40" x2="520.34" y2="146.72" stroke="#14141c" stroke-width="1.7"/><line x1="530.09" y1="142.00" x2="530.09" y2="144.90" stroke="#14141c" stroke-width="1.0"/><line x1="516.85" y1="149.81" x2="507.40" y2="154.13" stroke="#e2e5ff" stroke-width="1.1"/><line x1="516.85" y1="148.31" x2="507.40" y2="152.63" stroke="#14141c" stroke-width="1.7"/><line x1="517.15" y1="147.91" x2="517.15" y2="150.81" stroke="#14141c" stroke-width="1.0"/><line x1="503.91" y1="155.73" x2="494.98" y2="159.81" stroke="#e2e5ff" stroke-width="1.1"/><line x1="503.91" y1="154.23" x2="494.98" y2="158.31" stroke="#14141c" stroke-width="1.7"/><line x1="504.21" y1="153.83" x2="504.21" y2="156.73" stroke="#14141c" stroke-width="1.0"/><line x1="505.35" y1="163.63" x2="505.35" y2="157.63" stroke="#444" stroke-width="0.9"/><polygon points="401.32,164.00 453.59,187.29 401.83,210.95 349.56,187.66" fill="#bcc0ec"/><polygon points="359.91,182.93 412.18,206.22 401.83,210.95 349.56,187.66" fill="#ededed"/><polygon points="365.55,185.44 371.04,187.88 365.34,190.49" fill="#c4c7ef"/><polygon points="372.86,188.70 378.35,191.14 372.66,193.75" fill="#c4c7ef"/><polygon points="380.18,191.96 385.67,194.41 379.98,197.01" fill="#c4c7ef"/><polygon points="387.50,195.22 392.99,197.67 387.29,200.27" fill="#c4c7ef"/><polygon points="394.82,198.48 400.31,200.93 394.61,203.53" fill="#c4c7ef"/><polygon points="402.14,201.74 407.62,204.19 401.93,206.79" fill="#c4c7ef"/><polygon points="445.23,183.56 453.59,187.29 401.83,210.95 393.47,207.22" fill="#cacacc"/><polygon points="444.97,183.45 436.17,187.47 450.98,186.13" fill="#bcc0ec"/><polygon points="432.03,189.36 423.23,193.38 438.04,192.04" fill="#bcc0ec"/><polygon points="419.09,195.28 410.29,199.30 425.10,197.96" fill="#bcc0ec"/><polygon points="406.15,201.19 397.35,205.21 412.16,203.87" fill="#bcc0ec"/><line x1="388.38" y1="169.91" x2="432.29" y2="189.48" stroke="#1e1e28" stroke-width="1.1"/><line x1="375.44" y1="175.83" x2="419.35" y2="195.39" stroke="#1e1e28" stroke-width="1.1"/><line x1="362.50" y1="181.75" x2="406.41" y2="201.31" stroke="#1e1e28" stroke-width="1.1"/><line x1="412.30" y1="168.89" x2="370.89" y2="187.82" stroke="#2a2a36" stroke-width="0.7"/><line x1="423.27" y1="173.78" x2="381.87" y2="192.71" stroke="#2a2a36" stroke-width="0.7"/><line x1="434.25" y1="178.67" x2="392.84" y2="197.60" stroke="#2a2a36" stroke-width="0.7"/><line x1="402.62" y1="169.00" x2="393.18" y2="173.32" stroke="#e2e5ff" stroke-width="1.1"/><line x1="402.62" y1="167.50" x2="393.18" y2="171.82" stroke="#14141c" stroke-width="1.7"/><line x1="402.92" y1="167.10" x2="402.92" y2="170.00" stroke="#14141c" stroke-width="1.0"/><line x1="389.68" y1="174.92" x2="380.24" y2="179.23" stroke="#e2e5ff" stroke-width="1.1"/><line x1="389.68" y1="173.42" x2="380.24" y2="177.73" stroke="#14141c" stroke-width="1.7"/><line x1="389.98" y1="173.02" x2="389.98" y2="175.92" stroke="#14141c" stroke-width="1.0"/><line x1="376.74" y1="180.83" x2="367.30" y2="185.15" stroke="#e2e5ff" stroke-width="1.1"/><line x1="376.74" y1="179.33" x2="367.30" y2="183.65" stroke="#14141c" stroke-width="1.7"/><line x1="377.04" y1="178.93" x2="377.04" y2="181.83" stroke="#14141c" stroke-width="1.0"/><line x1="363.80" y1="186.75" x2="354.87" y2="190.83" stroke="#e2e5ff" stroke-width="1.1"/><line x1="363.80" y1="185.25" x2="354.87" y2="189.33" stroke="#14141c" stroke-width="1.7"/><line x1="364.10" y1="184.85" x2="364.10" y2="187.75" stroke="#14141c" stroke-width="1.0"/><line x1="409.94" y1="172.26" x2="400.49" y2="176.58" stroke="#e2e5ff" stroke-width="1.1"/><line x1="409.94" y1="170.76" x2="400.49" y2="175.08" stroke="#14141c" stroke-width="1.7"/><line x1="410.24" y1="170.36" x2="410.24" y2="173.26" stroke="#14141c" stroke-width="1.0"/><line x1="397.00" y1="178.18" x2="387.55" y2="182.49" stroke="#e2e5ff" stroke-width="1.1"/><line x1="397.00" y1="176.68" x2="387.55" y2="180.99" stroke="#14141c" stroke-width="1.7"/><line x1="397.30" y1="176.28" x2="397.30" y2="179.18" stroke="#14141c" stroke-width="1.0"/><line x1="384.06" y1="184.09" x2="374.61" y2="188.41" stroke="#e2e5ff" stroke-width="1.1"/><line x1="384.06" y1="182.59" x2="374.61" y2="186.91" stroke="#14141c" stroke-width="1.7"/><line x1="384.36" y1="182.19" x2="384.36" y2="185.09" stroke="#14141c" stroke-width="1.0"/><line x1="371.12" y1="190.01" x2="362.19" y2="194.09" stroke="#e2e5ff" stroke-width="1.1"/><line x1="371.12" y1="188.51" x2="362.19" y2="192.59" stroke="#14141c" stroke-width="1.7"/><line x1="371.42" y1="188.11" x2="371.42" y2="191.01" stroke="#14141c" stroke-width="1.0"/><line x1="417.26" y1="175.52" x2="407.81" y2="179.84" stroke="#e2e5ff" stroke-width="1.1"/><line x1="417.26" y1="174.02" x2="407.81" y2="178.34" stroke="#14141c" stroke-width="1.7"/><line x1="417.56" y1="173.62" x2="417.56" y2="176.52" stroke="#14141c" stroke-width="1.0"/><line x1="404.32" y1="181.44" x2="394.87" y2="185.75" stroke="#e2e5ff" stroke-width="1.1"/><line x1="404.32" y1="179.94" x2="394.87" y2="184.25" stroke="#14141c" stroke-width="1.7"/><line x1="404.62" y1="179.54" x2="404.62" y2="182.44" stroke="#14141c" stroke-width="1.0"/><line x1="391.38" y1="187.35" x2="381.93" y2="191.67" stroke="#e2e5ff" stroke-width="1.1"/><line x1="391.38" y1="185.85" x2="381.93" y2="190.17" stroke="#14141c" stroke-width="1.7"/><line x1="391.68" y1="185.45" x2="391.68" y2="188.35" stroke="#14141c" stroke-width="1.0"/><line x1="378.44" y1="193.27" x2="369.51" y2="197.35" stroke="#e2e5ff" stroke-width="1.1"/><line x1="378.44" y1="191.77" x2="369.51" y2="195.85" stroke="#14141c" stroke-width="1.7"/><line x1="378.74" y1="191.37" x2="378.74" y2="194.27" stroke="#14141c" stroke-width="1.0"/><line x1="424.58" y1="178.78" x2="415.13" y2="183.10" stroke="#e2e5ff" stroke-width="1.1"/><line x1="424.58" y1="177.28" x2="415.13" y2="181.60" stroke="#14141c" stroke-width="1.7"/><line x1="424.88" y1="176.88" x2="424.88" y2="179.78" stroke="#14141c" stroke-width="1.0"/><line x1="411.64" y1="184.70" x2="402.19" y2="189.02" stroke="#e2e5ff" stroke-width="1.1"/><line x1="411.64" y1="183.20" x2="402.19" y2="187.52" stroke="#14141c" stroke-width="1.7"/><line x1="411.94" y1="182.80" x2="411.94" y2="185.70" stroke="#14141c" stroke-width="1.0"/><line x1="398.70" y1="190.61" x2="389.25" y2="194.93" stroke="#e2e5ff" stroke-width="1.1"/><line x1="398.70" y1="189.11" x2="389.25" y2="193.43" stroke="#14141c" stroke-width="1.7"/><line x1="399.00" y1="188.71" x2="399.00" y2="191.61" stroke="#14141c" stroke-width="1.0"/><line x1="385.76" y1="196.53" x2="376.83" y2="200.61" stroke="#e2e5ff" stroke-width="1.1"/><line x1="385.76" y1="195.03" x2="376.83" y2="199.11" stroke="#14141c" stroke-width="1.7"/><line x1="386.06" y1="194.63" x2="386.06" y2="197.53" stroke="#14141c" stroke-width="1.0"/><line x1="431.89" y1="182.04" x2="422.45" y2="186.36" stroke="#e2e5ff" stroke-width="1.1"/><line x1="431.89" y1="180.54" x2="422.45" y2="184.86" stroke="#14141c" stroke-width="1.7"/><line x1="432.19" y1="180.14" x2="432.19" y2="183.04" stroke="#14141c" stroke-width="1.0"/><line x1="418.95" y1="187.96" x2="409.51" y2="192.28" stroke="#e2e5ff" stroke-width="1.1"/><line x1="418.95" y1="186.46" x2="409.51" y2="190.78" stroke="#14141c" stroke-width="1.7"/><line x1="419.25" y1="186.06" x2="419.25" y2="188.96" stroke="#14141c" stroke-width="1.0"/><line x1="406.01" y1="193.87" x2="396.57" y2="198.19" stroke="#e2e5ff" stroke-width="1.1"/><line x1="406.01" y1="192.37" x2="396.57" y2="196.69" stroke="#14141c" stroke-width="1.7"/><line x1="406.31" y1="191.97" x2="406.31" y2="194.87" stroke="#14141c" stroke-width="1.0"/><line x1="393.07" y1="199.79" x2="384.14" y2="203.87" stroke="#e2e5ff" stroke-width="1.1"/><line x1="393.07" y1="198.29" x2="384.14" y2="202.37" stroke="#14141c" stroke-width="1.7"/><line x1="393.37" y1="197.89" x2="393.37" y2="200.79" stroke="#14141c" stroke-width="1.0"/><line x1="439.21" y1="185.30" x2="429.76" y2="189.62" stroke="#e2e5ff" stroke-width="1.1"/><line x1="439.21" y1="183.80" x2="429.76" y2="188.12" stroke="#14141c" stroke-width="1.7"/><line x1="439.51" y1="183.40" x2="439.51" y2="186.30" stroke="#14141c" stroke-width="1.0"/><line x1="426.27" y1="191.22" x2="416.82" y2="195.54" stroke="#e2e5ff" stroke-width="1.1"/><line x1="426.27" y1="189.72" x2="416.82" y2="194.04" stroke="#14141c" stroke-width="1.7"/><line x1="426.57" y1="189.32" x2="426.57" y2="192.22" stroke="#14141c" stroke-width="1.0"/><line x1="413.33" y1="197.13" x2="403.88" y2="201.45" stroke="#e2e5ff" stroke-width="1.1"/><line x1="413.33" y1="195.63" x2="403.88" y2="199.95" stroke="#14141c" stroke-width="1.7"/><line x1="413.63" y1="195.23" x2="413.63" y2="198.13" stroke="#14141c" stroke-width="1.0"/><line x1="400.39" y1="203.05" x2="391.46" y2="207.13" stroke="#e2e5ff" stroke-width="1.1"/><line x1="400.39" y1="201.55" x2="391.46" y2="205.63" stroke="#14141c" stroke-width="1.7"/><line x1="400.69" y1="201.15" x2="400.69" y2="204.05" stroke="#14141c" stroke-width="1.0"/><line x1="401.83" y1="210.95" x2="401.83" y2="204.95" stroke="#444" stroke-width="0.9"/><polygon points="297.80,211.32 350.07,234.61 298.31,258.27 246.04,234.98" fill="#bcc0ec"/><polygon points="256.39,230.25 308.66,253.54 298.31,258.27 246.04,234.98" fill="#ededed"/><polygon points="262.03,232.76 267.52,235.20 261.82,237.81" fill="#c4c7ef"/><polygon points="269.34,236.02 274.83,238.46 269.14,241.07" fill="#c4c7ef"/><polygon points="276.66,239.28 282.15,241.73 276.46,244.33" fill="#c4c7ef"/><polygon points="283.98,242.54 289.47,244.99 283.77,247.59" fill="#c4c7ef"/><polygon points="291.30,245.80 296.79,248.25 291.09,250.85" fill="#c4c7ef"/><polygon points="298.62,249.06 304.10,251.51 298.41,254.11" fill="#c4c7ef"/><polygon points="341.71,230.88 350.07,234.61 298.31,258.27 289.95,254.54" fill="#cacacc"/><polygon points="341.45,230.77 332.65,234.79 347.46,233.45" fill="#bcc0ec"/><polygon points="328.51,236.68 319.71,240.70 334.52,239.36" fill="#bcc0ec"/><polygon points="315.57,242.60 306.77,246.62 321.58,245.28" fill="#bcc0ec"/><polygon points="302.63,248.51 293.83,252.53 308.64,251.19" fill="#bcc0ec"/><line x1="284.86" y1="217.24" x2="328.77" y2="236.80" stroke="#1e1e28" stroke-width="1.1"/><line x1="271.92" y1="223.15" x2="315.83" y2="242.71" stroke="#1e1e28" stroke-width="1.1"/><line x1="258.98" y1="229.06" x2="302.89" y2="248.63" stroke="#1e1e28" stroke-width="1.1"/><line x1="308.78" y1="216.21" x2="267.37" y2="235.14" stroke="#2a2a36" stroke-width="0.7"/><line x1="319.75" y1="221.10" x2="278.35" y2="240.03" stroke="#2a2a36" stroke-width="0.7"/><line x1="330.73" y1="225.99" x2="289.32" y2="244.92" stroke="#2a2a36" stroke-width="0.7"/><line x1="299.10" y1="216.32" x2="289.66" y2="220.64" stroke="#e2e5ff" stroke-width="1.1"/><line x1="299.10" y1="214.82" x2="289.66" y2="219.14" stroke="#14141c" stroke-width="1.7"/><line x1="299.40" y1="214.42" x2="299.40" y2="217.32" stroke="#14141c" stroke-width="1.0"/><line x1="286.16" y1="222.24" x2="276.72" y2="226.55" stroke="#e2e5ff" stroke-width="1.1"/><line x1="286.16" y1="220.74" x2="276.72" y2="225.05" stroke="#14141c" stroke-width="1.7"/><line x1="286.46" y1="220.34" x2="286.46" y2="223.24" stroke="#14141c" stroke-width="1.0"/><line x1="273.22" y1="228.15" x2="263.78" y2="232.47" stroke="#e2e5ff" stroke-width="1.1"/><line x1="273.22" y1="226.65" x2="263.78" y2="230.97" stroke="#14141c" stroke-width="1.7"/><line x1="273.52" y1="226.25" x2="273.52" y2="229.15" stroke="#14141c" stroke-width="1.0"/><line x1="260.28" y1="234.07" x2="251.35" y2="238.15" stroke="#e2e5ff" stroke-width="1.1"/><line x1="260.28" y1="232.57" x2="251.35" y2="236.65" stroke="#14141c" stroke-width="1.7"/><line x1="260.58" y1="232.17" x2="260.58" y2="235.07" stroke="#14141c" stroke-width="1.0"/><line x1="306.42" y1="219.58" x2="296.97" y2="223.90" stroke="#e2e5ff" stroke-width="1.1"/><line x1="306.42" y1="218.08" x2="296.97" y2="222.40" stroke="#14141c" stroke-width="1.7"/><line x1="306.72" y1="217.68" x2="306.72" y2="220.58" stroke="#14141c" stroke-width="1.0"/><line x1="293.48" y1="225.50" x2="284.03" y2="229.81" stroke="#e2e5ff" stroke-width="1.1"/><line x1="293.48" y1="224.00" x2="284.03" y2="228.31" stroke="#14141c" stroke-width="1.7"/><line x1="293.78" y1="223.60" x2="293.78" y2="226.50" stroke="#14141c" stroke-width="1.0"/><line x1="280.54" y1="231.41" x2="271.09" y2="235.73" stroke="#e2e5ff" stroke-width="1.1"/><line x1="280.54" y1="229.91" x2="271.09" y2="234.23" stroke="#14141c" stroke-width="1.7"/><line x1="280.84" y1="229.51" x2="280.84" y2="232.41" stroke="#14141c" stroke-width="1.0"/><line x1="267.60" y1="237.33" x2="258.67" y2="241.41" stroke="#e2e5ff" stroke-width="1.1"/><line x1="267.60" y1="235.83" x2="258.67" y2="239.91" stroke="#14141c" stroke-width="1.7"/><line x1="267.90" y1="235.43" x2="267.90" y2="238.33" stroke="#14141c" stroke-width="1.0"/><line x1="313.74" y1="222.84" x2="304.29" y2="227.16" stroke="#e2e5ff" stroke-width="1.1"/><line x1="313.74" y1="221.34" x2="304.29" y2="225.66" stroke="#14141c" stroke-width="1.7"/><line x1="314.04" y1="220.94" x2="314.04" y2="223.84" stroke="#14141c" stroke-width="1.0"/><line x1="300.80" y1="228.76" x2="291.35" y2="233.07" stroke="#e2e5ff" stroke-width="1.1"/><line x1="300.80" y1="227.26" x2="291.35" y2="231.57" stroke="#14141c" stroke-width="1.7"/><line x1="301.10" y1="226.86" x2="301.10" y2="229.76" stroke="#14141c" stroke-width="1.0"/><line x1="287.86" y1="234.67" x2="278.41" y2="238.99" stroke="#e2e5ff" stroke-width="1.1"/><line x1="287.86" y1="233.17" x2="278.41" y2="237.49" stroke="#14141c" stroke-width="1.7"/><line x1="288.16" y1="232.77" x2="288.16" y2="235.67" stroke="#14141c" stroke-width="1.0"/><line x1="274.92" y1="240.59" x2="265.99" y2="244.67" stroke="#e2e5ff" stroke-width="1.1"/><line x1="274.92" y1="239.09" x2="265.99" y2="243.17" stroke="#14141c" stroke-width="1.7"/><line x1="275.22" y1="238.69" x2="275.22" y2="241.59" stroke="#14141c" stroke-width="1.0"/><line x1="321.06" y1="226.10" x2="311.61" y2="230.42" stroke="#e2e5ff" stroke-width="1.1"/><line x1="321.06" y1="224.60" x2="311.61" y2="228.92" stroke="#14141c" stroke-width="1.7"/><line x1="321.36" y1="224.20" x2="321.36" y2="227.10" stroke="#14141c" stroke-width="1.0"/><line x1="308.12" y1="232.02" x2="298.67" y2="236.34" stroke="#e2e5ff" stroke-width="1.1"/><line x1="308.12" y1="230.52" x2="298.67" y2="234.84" stroke="#14141c" stroke-width="1.7"/><line x1="308.42" y1="230.12" x2="308.42" y2="233.02" stroke="#14141c" stroke-width="1.0"/><line x1="295.18" y1="237.93" x2="285.73" y2="242.25" stroke="#e2e5ff" stroke-width="1.1"/><line x1="295.18" y1="236.43" x2="285.73" y2="240.75" stroke="#14141c" stroke-width="1.7"/><line x1="295.48" y1="236.03" x2="295.48" y2="238.93" stroke="#14141c" stroke-width="1.0"/><line x1="282.24" y1="243.85" x2="273.31" y2="247.93" stroke="#e2e5ff" stroke-width="1.1"/><line x1="282.24" y1="242.35" x2="273.31" y2="246.43" stroke="#14141c" stroke-width="1.7"/><line x1="282.54" y1="241.95" x2="282.54" y2="244.85" stroke="#14141c" stroke-width="1.0"/><line x1="328.37" y1="229.36" x2="318.93" y2="233.68" stroke="#e2e5ff" stroke-width="1.1"/><line x1="328.37" y1="227.86" x2="318.93" y2="232.18" stroke="#14141c" stroke-width="1.7"/><line x1="328.67" y1="227.46" x2="328.67" y2="230.36" stroke="#14141c" stroke-width="1.0"/><line x1="315.43" y1="235.28" x2="305.99" y2="239.60" stroke="#e2e5ff" stroke-width="1.1"/><line x1="315.43" y1="233.78" x2="305.99" y2="238.10" stroke="#14141c" stroke-width="1.7"/><line x1="315.73" y1="233.38" x2="315.73" y2="236.28" stroke="#14141c" stroke-width="1.0"/><line x1="302.49" y1="241.19" x2="293.05" y2="245.51" stroke="#e2e5ff" stroke-width="1.1"/><line x1="302.49" y1="239.69" x2="293.05" y2="244.01" stroke="#14141c" stroke-width="1.7"/><line x1="302.79" y1="239.29" x2="302.79" y2="242.19" stroke="#14141c" stroke-width="1.0"/><line x1="289.55" y1="247.11" x2="280.62" y2="251.19" stroke="#e2e5ff" stroke-width="1.1"/><line x1="289.55" y1="245.61" x2="280.62" y2="249.69" stroke="#14141c" stroke-width="1.7"/><line x1="289.85" y1="245.21" x2="289.85" y2="248.11" stroke="#14141c" stroke-width="1.0"/><line x1="335.69" y1="232.62" x2="326.24" y2="236.94" stroke="#e2e5ff" stroke-width="1.1"/><line x1="335.69" y1="231.12" x2="326.24" y2="235.44" stroke="#14141c" stroke-width="1.7"/><line x1="335.99" y1="230.72" x2="335.99" y2="233.62" stroke="#14141c" stroke-width="1.0"/><line x1="322.75" y1="238.54" x2="313.30" y2="242.86" stroke="#e2e5ff" stroke-width="1.1"/><line x1="322.75" y1="237.04" x2="313.30" y2="241.36" stroke="#14141c" stroke-width="1.7"/><line x1="323.05" y1="236.64" x2="323.05" y2="239.54" stroke="#14141c" stroke-width="1.0"/><line x1="309.81" y1="244.45" x2="300.36" y2="248.77" stroke="#e2e5ff" stroke-width="1.1"/><line x1="309.81" y1="242.95" x2="300.36" y2="247.27" stroke="#14141c" stroke-width="1.7"/><line x1="310.11" y1="242.55" x2="310.11" y2="245.45" stroke="#14141c" stroke-width="1.0"/><line x1="296.87" y1="250.37" x2="287.94" y2="254.45" stroke="#e2e5ff" stroke-width="1.1"/><line x1="296.87" y1="248.87" x2="287.94" y2="252.95" stroke="#14141c" stroke-width="1.7"/><line x1="297.17" y1="248.47" x2="297.17" y2="251.37" stroke="#14141c" stroke-width="1.0"/><line x1="298.31" y1="258.27" x2="298.31" y2="252.27" stroke="#444" stroke-width="0.9"/><polygon points="609.38,163.26 661.65,186.55 609.89,210.21 557.62,186.92" fill="#bcc0ec"/><polygon points="567.97,182.19 620.24,205.48 609.89,210.21 557.62,186.92" fill="#ededed"/><polygon points="573.61,184.70 579.10,187.14 573.40,189.75" fill="#c4c7ef"/><polygon points="580.92,187.96 586.41,190.40 580.72,193.01" fill="#c4c7ef"/><polygon points="588.24,191.22 593.73,193.67 588.04,196.27" fill="#c4c7ef"/><polygon points="595.56,194.48 601.05,196.93 595.35,199.53" fill="#c4c7ef"/><polygon points="602.88,197.74 608.37,200.19 602.67,202.79" fill="#c4c7ef"/><polygon points="610.20,201.00 615.68,203.45 609.99,206.05" fill="#c4c7ef"/><polygon points="653.29,182.82 661.65,186.55 609.89,210.21 601.53,206.48" fill="#cacacc"/><polygon points="653.03,182.71 644.23,186.73 659.04,185.39" fill="#bcc0ec"/><polygon points="640.09,188.62 631.29,192.64 646.10,191.30" fill="#bcc0ec"/><polygon points="627.15,194.54 618.35,198.56 633.16,197.22" fill="#bcc0ec"/><polygon points="614.21,200.45 605.41,204.47 620.22,203.13" fill="#bcc0ec"/><line x1="596.44" y1="169.17" x2="640.35" y2="188.74" stroke="#1e1e28" stroke-width="1.1"/><line x1="583.50" y1="175.09" x2="627.41" y2="194.65" stroke="#1e1e28" stroke-width="1.1"/><line x1="570.56" y1="181.00" x2="614.47" y2="200.57" stroke="#1e1e28" stroke-width="1.1"/><line x1="620.36" y1="168.15" x2="578.95" y2="187.08" stroke="#2a2a36" stroke-width="0.7"/><line x1="631.33" y1="173.04" x2="589.93" y2="191.97" stroke="#2a2a36" stroke-width="0.7"/><line x1="642.31" y1="177.93" x2="600.90" y2="196.86" stroke="#2a2a36" stroke-width="0.7"/><line x1="610.68" y1="168.26" x2="601.24" y2="172.58" stroke="#e2e5ff" stroke-width="1.1"/><line x1="610.68" y1="166.76" x2="601.24" y2="171.08" stroke="#14141c" stroke-width="1.7"/><line x1="610.98" y1="166.36" x2="610.98" y2="169.26" stroke="#14141c" stroke-width="1.0"/><line x1="597.74" y1="174.18" x2="588.30" y2="178.49" stroke="#e2e5ff" stroke-width="1.1"/><line x1="597.74" y1="172.68" x2="588.30" y2="176.99" stroke="#14141c" stroke-width="1.7"/><line x1="598.04" y1="172.28" x2="598.04" y2="175.18" stroke="#14141c" stroke-width="1.0"/><line x1="584.80" y1="180.09" x2="575.36" y2="184.41" stroke="#e2e5ff" stroke-width="1.1"/><line x1="584.80" y1="178.59" x2="575.36" y2="182.91" stroke="#14141c" stroke-width="1.7"/><line x1="585.10" y1="178.19" x2="585.10" y2="181.09" stroke="#14141c" stroke-width="1.0"/><line x1="571.86" y1="186.01" x2="562.93" y2="190.09" stroke="#e2e5ff" stroke-width="1.1"/><line x1="571.86" y1="184.51" x2="562.93" y2="188.59" stroke="#14141c" stroke-width="1.7"/><line x1="572.16" y1="184.11" x2="572.16" y2="187.01" stroke="#14141c" stroke-width="1.0"/><line x1="618.00" y1="171.52" x2="608.55" y2="175.84" stroke="#e2e5ff" stroke-width="1.1"/><line x1="618.00" y1="170.02" x2="608.55" y2="174.34" stroke="#14141c" stroke-width="1.7"/><line x1="618.30" y1="169.62" x2="618.30" y2="172.52" stroke="#14141c" stroke-width="1.0"/><line x1="605.06" y1="177.44" x2="595.61" y2="181.75" stroke="#e2e5ff" stroke-width="1.1"/><line x1="605.06" y1="175.94" x2="595.61" y2="180.25" stroke="#14141c" stroke-width="1.7"/><line x1="605.36" y1="175.54" x2="605.36" y2="178.44" stroke="#14141c" stroke-width="1.0"/><line x1="592.12" y1="183.35" x2="582.67" y2="187.67" stroke="#e2e5ff" stroke-width="1.1"/><line x1="592.12" y1="181.85" x2="582.67" y2="186.17" stroke="#14141c" stroke-width="1.7"/><line x1="592.42" y1="181.45" x2="592.42" y2="184.35" stroke="#14141c" stroke-width="1.0"/><line x1="579.18" y1="189.27" x2="570.25" y2="193.35" stroke="#e2e5ff" stroke-width="1.1"/><line x1="579.18" y1="187.77" x2="570.25" y2="191.85" stroke="#14141c" stroke-width="1.7"/><line x1="579.48" y1="187.37" x2="579.48" y2="190.27" stroke="#14141c" stroke-width="1.0"/><line x1="625.32" y1="174.78" x2="615.87" y2="179.10" stroke="#e2e5ff" stroke-width="1.1"/><line x1="625.32" y1="173.28" x2="615.87" y2="177.60" stroke="#14141c" stroke-width="1.7"/><line x1="625.62" y1="172.88" x2="625.62" y2="175.78" stroke="#14141c" stroke-width="1.0"/><line x1="612.38" y1="180.70" x2="602.93" y2="185.01" stroke="#e2e5ff" stroke-width="1.1"/><line x1="612.38" y1="179.20" x2="602.93" y2="183.51" stroke="#14141c" stroke-width="1.7"/><line x1="612.68" y1="178.80" x2="612.68" y2="181.70" stroke="#14141c" stroke-width="1.0"/><line x1="599.44" y1="186.61" x2="589.99" y2="190.93" stroke="#e2e5ff" stroke-width="1.1"/><line x1="599.44" y1="185.11" x2="589.99" y2="189.43" stroke="#14141c" stroke-width="1.7"/><line x1="599.74" y1="184.71" x2="599.74" y2="187.61" stroke="#14141c" stroke-width="1.0"/><line x1="586.50" y1="192.53" x2="577.57" y2="196.61" stroke="#e2e5ff" stroke-width="1.1"/><line x1="586.50" y1="191.03" x2="577.57" y2="195.11" stroke="#14141c" stroke-width="1.7"/><line x1="586.80" y1="190.63" x2="586.80" y2="193.53" stroke="#14141c" stroke-width="1.0"/><line x1="632.64" y1="178.04" x2="623.19" y2="182.36" stroke="#e2e5ff" stroke-width="1.1"/><line x1="632.64" y1="176.54" x2="623.19" y2="180.86" stroke="#14141c" stroke-width="1.7"/><line x1="632.94" y1="176.14" x2="632.94" y2="179.04" stroke="#14141c" stroke-width="1.0"/><line x1="619.70" y1="183.96" x2="610.25" y2="188.28" stroke="#e2e5ff" stroke-width="1.1"/><line x1="619.70" y1="182.46" x2="610.25" y2="186.78" stroke="#14141c" stroke-width="1.7"/><line x1="620.00" y1="182.06" x2="620.00" y2="184.96" stroke="#14141c" stroke-width="1.0"/><line x1="606.76" y1="189.87" x2="597.31" y2="194.19" stroke="#e2e5ff" stroke-width="1.1"/><line x1="606.76" y1="188.37" x2="597.31" y2="192.69" stroke="#14141c" stroke-width="1.7"/><line x1="607.06" y1="187.97" x2="607.06" y2="190.87" stroke="#14141c" stroke-width="1.0"/><line x1="593.82" y1="195.79" x2="584.89" y2="199.87" stroke="#e2e5ff" stroke-width="1.1"/><line x1="593.82" y1="194.29" x2="584.89" y2="198.37" stroke="#14141c" stroke-width="1.7"/><line x1="594.12" y1="193.89" x2="594.12" y2="196.79" stroke="#14141c" stroke-width="1.0"/><line x1="639.95" y1="181.30" x2="630.51" y2="185.62" stroke="#e2e5ff" stroke-width="1.1"/><line x1="639.95" y1="179.80" x2="630.51" y2="184.12" stroke="#14141c" stroke-width="1.7"/><line x1="640.25" y1="179.40" x2="640.25" y2="182.30" stroke="#14141c" stroke-width="1.0"/><line x1="627.01" y1="187.22" x2="617.57" y2="191.54" stroke="#e2e5ff" stroke-width="1.1"/><line x1="627.01" y1="185.72" x2="617.57" y2="190.04" stroke="#14141c" stroke-width="1.7"/><line x1="627.31" y1="185.32" x2="627.31" y2="188.22" stroke="#14141c" stroke-width="1.0"/><line x1="614.07" y1="193.13" x2="604.63" y2="197.45" stroke="#e2e5ff" stroke-width="1.1"/><line x1="614.07" y1="191.63" x2="604.63" y2="195.95" stroke="#14141c" stroke-width="1.7"/><line x1="614.37" y1="191.23" x2="614.37" y2="194.13" stroke="#14141c" stroke-width="1.0"/><line x1="601.13" y1="199.05" x2="592.20" y2="203.13" stroke="#e2e5ff" stroke-width="1.1"/><line x1="601.13" y1="197.55" x2="592.20" y2="201.63" stroke="#14141c" stroke-width="1.7"/><line x1="601.43" y1="197.15" x2="601.43" y2="200.05" stroke="#14141c" stroke-width="1.0"/><line x1="647.27" y1="184.56" x2="637.82" y2="188.88" stroke="#e2e5ff" stroke-width="1.1"/><line x1="647.27" y1="183.06" x2="637.82" y2="187.38" stroke="#14141c" stroke-width="1.7"/><line x1="647.57" y1="182.66" x2="647.57" y2="185.56" stroke="#14141c" stroke-width="1.0"/><line x1="634.33" y1="190.48" x2="624.88" y2="194.80" stroke="#e2e5ff" stroke-width="1.1"/><line x1="634.33" y1="188.98" x2="624.88" y2="193.30" stroke="#14141c" stroke-width="1.7"/><line x1="634.63" y1="188.58" x2="634.63" y2="191.48" stroke="#14141c" stroke-width="1.0"/><line x1="621.39" y1="196.39" x2="611.94" y2="200.71" stroke="#e2e5ff" stroke-width="1.1"/><line x1="621.39" y1="194.89" x2="611.94" y2="199.21" stroke="#14141c" stroke-width="1.7"/><line x1="621.69" y1="194.49" x2="621.69" y2="197.39" stroke="#14141c" stroke-width="1.0"/><line x1="608.45" y1="202.31" x2="599.52" y2="206.39" stroke="#e2e5ff" stroke-width="1.1"/><line x1="608.45" y1="200.81" x2="599.52" y2="204.89" stroke="#14141c" stroke-width="1.7"/><line x1="608.75" y1="200.41" x2="608.75" y2="203.31" stroke="#14141c" stroke-width="1.0"/><line x1="609.89" y1="210.21" x2="609.89" y2="204.21" stroke="#444" stroke-width="0.9"/><polygon points="505.86,210.58 558.13,233.87 506.37,257.53 454.10,234.24" fill="#bcc0ec"/><polygon points="464.45,229.51 516.72,252.80 506.37,257.53 454.10,234.24" fill="#ededed"/><polygon points="470.09,232.02 475.58,234.46 469.88,237.07" fill="#c4c7ef"/><polygon points="477.40,235.28 482.89,237.72 477.20,240.33" fill="#c4c7ef"/><polygon points="484.72,238.54 490.21,240.99 484.52,243.59" fill="#c4c7ef"/><polygon points="492.04,241.80 497.53,244.25 491.83,246.85" fill="#c4c7ef"/><polygon points="499.36,245.06 504.85,247.51 499.15,250.11" fill="#c4c7ef"/><polygon points="506.68,248.32 512.16,250.77 506.47,253.37" fill="#c4c7ef"/><polygon points="549.77,230.14 558.13,233.87 506.37,257.53 498.01,253.80" fill="#cacacc"/><polygon points="549.51,230.03 540.71,234.05 555.52,232.71" fill="#bcc0ec"/><polygon points="536.57,235.94 527.77,239.96 542.58,238.62" fill="#bcc0ec"/><polygon points="523.63,241.86 514.83,245.88 529.64,244.54" fill="#bcc0ec"/><polygon points="510.69,247.77 501.89,251.79 516.70,250.45" fill="#bcc0ec"/><line x1="492.92" y1="216.50" x2="536.83" y2="236.06" stroke="#1e1e28" stroke-width="1.1"/><line x1="479.98" y1="222.41" x2="523.89" y2="241.97" stroke="#1e1e28" stroke-width="1.1"/><line x1="467.04" y1="228.32" x2="510.95" y2="247.89" stroke="#1e1e28" stroke-width="1.1"/><line x1="516.84" y1="215.47" x2="475.43" y2="234.40" stroke="#2a2a36" stroke-width="0.7"/><line x1="527.81" y1="220.36" x2="486.41" y2="239.29" stroke="#2a2a36" stroke-width="0.7"/><line x1="538.79" y1="225.25" x2="497.38" y2="244.18" stroke="#2a2a36" stroke-width="0.7"/><line x1="507.16" y1="215.58" x2="497.72" y2="219.90" stroke="#e2e5ff" stroke-width="1.1"/><line x1="507.16" y1="214.08" x2="497.72" y2="218.40" stroke="#14141c" stroke-width="1.7"/><line x1="507.46" y1="213.68" x2="507.46" y2="216.58" stroke="#14141c" stroke-width="1.0"/><line x1="494.22" y1="221.50" x2="484.78" y2="225.81" stroke="#e2e5ff" stroke-width="1.1"/><line x1="494.22" y1="220.00" x2="484.78" y2="224.31" stroke="#14141c" stroke-width="1.7"/><line x1="494.52" y1="219.60" x2="494.52" y2="222.50" stroke="#14141c" stroke-width="1.0"/><line x1="481.28" y1="227.41" x2="471.84" y2="231.73" stroke="#e2e5ff" stroke-width="1.1"/><line x1="481.28" y1="225.91" x2="471.84" y2="230.23" stroke="#14141c" stroke-width="1.7"/><line x1="481.58" y1="225.51" x2="481.58" y2="228.41" stroke="#14141c" stroke-width="1.0"/><line x1="468.34" y1="233.33" x2="459.41" y2="237.41" stroke="#e2e5ff" stroke-width="1.1"/><line x1="468.34" y1="231.83" x2="459.41" y2="235.91" stroke="#14141c" stroke-width="1.7"/><line x1="468.64" y1="231.43" x2="468.64" y2="234.33" stroke="#14141c" stroke-width="1.0"/><line x1="514.48" y1="218.84" x2="505.03" y2="223.16" stroke="#e2e5ff" stroke-width="1.1"/><line x1="514.48" y1="217.34" x2="505.03" y2="221.66" stroke="#14141c" stroke-width="1.7"/><line x1="514.78" y1="216.94" x2="514.78" y2="219.84" stroke="#14141c" stroke-width="1.0"/><line x1="501.54" y1="224.76" x2="492.09" y2="229.07" stroke="#e2e5ff" stroke-width="1.1"/><line x1="501.54" y1="223.26" x2="492.09" y2="227.57" stroke="#14141c" stroke-width="1.7"/><line x1="501.84" y1="222.86" x2="501.84" y2="225.76" stroke="#14141c" stroke-width="1.0"/><line x1="488.60" y1="230.67" x2="479.15" y2="234.99" stroke="#e2e5ff" stroke-width="1.1"/><line x1="488.60" y1="229.17" x2="479.15" y2="233.49" stroke="#14141c" stroke-width="1.7"/><line x1="488.90" y1="228.77" x2="488.90" y2="231.67" stroke="#14141c" stroke-width="1.0"/><line x1="475.66" y1="236.59" x2="466.73" y2="240.67" stroke="#e2e5ff" stroke-width="1.1"/><line x1="475.66" y1="235.09" x2="466.73" y2="239.17" stroke="#14141c" stroke-width="1.7"/><line x1="475.96" y1="234.69" x2="475.96" y2="237.59" stroke="#14141c" stroke-width="1.0"/><line x1="521.80" y1="222.10" x2="512.35" y2="226.42" stroke="#e2e5ff" stroke-width="1.1"/><line x1="521.80" y1="220.60" x2="512.35" y2="224.92" stroke="#14141c" stroke-width="1.7"/><line x1="522.10" y1="220.20" x2="522.10" y2="223.10" stroke="#14141c" stroke-width="1.0"/><line x1="508.86" y1="228.02" x2="499.41" y2="232.33" stroke="#e2e5ff" stroke-width="1.1"/><line x1="508.86" y1="226.52" x2="499.41" y2="230.83" stroke="#14141c" stroke-width="1.7"/><line x1="509.16" y1="226.12" x2="509.16" y2="229.02" stroke="#14141c" stroke-width="1.0"/><line x1="495.92" y1="233.93" x2="486.47" y2="238.25" stroke="#e2e5ff" stroke-width="1.1"/><line x1="495.92" y1="232.43" x2="486.47" y2="236.75" stroke="#14141c" stroke-width="1.7"/><line x1="496.22" y1="232.03" x2="496.22" y2="234.93" stroke="#14141c" stroke-width="1.0"/><line x1="482.98" y1="239.85" x2="474.05" y2="243.93" stroke="#e2e5ff" stroke-width="1.1"/><line x1="482.98" y1="238.35" x2="474.05" y2="242.43" stroke="#14141c" stroke-width="1.7"/><line x1="483.28" y1="237.95" x2="483.28" y2="240.85" stroke="#14141c" stroke-width="1.0"/><line x1="529.12" y1="225.36" x2="519.67" y2="229.68" stroke="#e2e5ff" stroke-width="1.1"/><line x1="529.12" y1="223.86" x2="519.67" y2="228.18" stroke="#14141c" stroke-width="1.7"/><line x1="529.42" y1="223.46" x2="529.42" y2="226.36" stroke="#14141c" stroke-width="1.0"/><line x1="516.18" y1="231.28" x2="506.73" y2="235.60" stroke="#e2e5ff" stroke-width="1.1"/><line x1="516.18" y1="229.78" x2="506.73" y2="234.10" stroke="#14141c" stroke-width="1.7"/><line x1="516.48" y1="229.38" x2="516.48" y2="232.28" stroke="#14141c" stroke-width="1.0"/><line x1="503.24" y1="237.19" x2="493.79" y2="241.51" stroke="#e2e5ff" stroke-width="1.1"/><line x1="503.24" y1="235.69" x2="493.79" y2="240.01" stroke="#14141c" stroke-width="1.7"/><line x1="503.54" y1="235.29" x2="503.54" y2="238.19" stroke="#14141c" stroke-width="1.0"/><line x1="490.30" y1="243.11" x2="481.37" y2="247.19" stroke="#e2e5ff" stroke-width="1.1"/><line x1="490.30" y1="241.61" x2="481.37" y2="245.69" stroke="#14141c" stroke-width="1.7"/><line x1="490.60" y1="241.21" x2="490.60" y2="244.11" stroke="#14141c" stroke-width="1.0"/><line x1="536.43" y1="228.62" x2="526.99" y2="232.94" stroke="#e2e5ff" stroke-width="1.1"/><line x1="536.43" y1="227.12" x2="526.99" y2="231.44" stroke="#14141c" stroke-width="1.7"/><line x1="536.73" y1="226.72" x2="536.73" y2="229.62" stroke="#14141c" stroke-width="1.0"/><line x1="523.49" y1="234.54" x2="514.05" y2="238.86" stroke="#e2e5ff" stroke-width="1.1"/><line x1="523.49" y1="233.04" x2="514.05" y2="237.36" stroke="#14141c" stroke-width="1.7"/><line x1="523.79" y1="232.64" x2="523.79" y2="235.54" stroke="#14141c" stroke-width="1.0"/><line x1="510.55" y1="240.45" x2="501.11" y2="244.77" stroke="#e2e5ff" stroke-width="1.1"/><line x1="510.55" y1="238.95" x2="501.11" y2="243.27" stroke="#14141c" stroke-width="1.7"/><line x1="510.85" y1="238.55" x2="510.85" y2="241.45" stroke="#14141c" stroke-width="1.0"/><line x1="497.61" y1="246.37" x2="488.68" y2="250.45" stroke="#e2e5ff" stroke-width="1.1"/><line x1="497.61" y1="244.87" x2="488.68" y2="248.95" stroke="#14141c" stroke-width="1.7"/><line x1="497.91" y1="244.47" x2="497.91" y2="247.37" stroke="#14141c" stroke-width="1.0"/><line x1="543.75" y1="231.88" x2="534.30" y2="236.20" stroke="#e2e5ff" stroke-width="1.1"/><line x1="543.75" y1="230.38" x2="534.30" y2="234.70" stroke="#14141c" stroke-width="1.7"/><line x1="544.05" y1="229.98" x2="544.05" y2="232.88" stroke="#14141c" stroke-width="1.0"/><line x1="530.81" y1="237.80" x2="521.36" y2="242.12" stroke="#e2e5ff" stroke-width="1.1"/><line x1="530.81" y1="236.30" x2="521.36" y2="240.62" stroke="#14141c" stroke-width="1.7"/><line x1="531.11" y1="235.90" x2="531.11" y2="238.80" stroke="#14141c" stroke-width="1.0"/><line x1="517.87" y1="243.71" x2="508.42" y2="248.03" stroke="#e2e5ff" stroke-width="1.1"/><line x1="517.87" y1="242.21" x2="508.42" y2="246.53" stroke="#14141c" stroke-width="1.7"/><line x1="518.17" y1="241.81" x2="518.17" y2="244.71" stroke="#14141c" stroke-width="1.0"/><line x1="504.93" y1="249.63" x2="496.00" y2="253.71" stroke="#e2e5ff" stroke-width="1.1"/><line x1="504.93" y1="248.13" x2="496.00" y2="252.21" stroke="#14141c" stroke-width="1.7"/><line x1="505.23" y1="247.73" x2="505.23" y2="250.63" stroke="#14141c" stroke-width="1.0"/><line x1="506.37" y1="257.53" x2="506.37" y2="251.53" stroke="#444" stroke-width="0.9"/><polygon points="402.34,257.90 454.61,281.19 402.85,304.85 350.58,281.56" fill="#bcc0ec"/><polygon points="360.93,276.83 413.20,300.12 402.85,304.85 350.58,281.56" fill="#ededed"/><polygon points="366.57,279.34 372.06,281.78 366.36,284.39" fill="#c4c7ef"/><polygon points="373.88,282.60 379.37,285.04 373.68,287.65" fill="#c4c7ef"/><polygon points="381.20,285.86 386.69,288.31 381.00,290.91" fill="#c4c7ef"/><polygon points="388.52,289.12 394.01,291.57 388.31,294.17" fill="#c4c7ef"/><polygon points="395.84,292.38 401.33,294.83 395.63,297.43" fill="#c4c7ef"/><polygon points="403.16,295.64 408.64,298.09 402.95,300.69" fill="#c4c7ef"/><polygon points="446.25,277.46 454.61,281.19 402.85,304.85 394.49,301.12" fill="#cacacc"/><polygon points="445.99,277.35 437.19,281.37 452.00,280.03" fill="#bcc0ec"/><polygon points="433.05,283.26 424.25,287.28 439.06,285.94" fill="#bcc0ec"/><polygon points="420.11,289.18 411.31,293.20 426.12,291.86" fill="#bcc0ec"/><polygon points="407.17,295.09 398.37,299.11 413.18,297.77" fill="#bcc0ec"/><line x1="389.40" y1="263.81" x2="433.31" y2="283.38" stroke="#1e1e28" stroke-width="1.1"/><line x1="376.46" y1="269.73" x2="420.37" y2="289.29" stroke="#1e1e28" stroke-width="1.1"/><line x1="363.52" y1="275.64" x2="407.43" y2="295.21" stroke="#1e1e28" stroke-width="1.1"/><line x1="413.32" y1="262.79" x2="371.91" y2="281.72" stroke="#2a2a36" stroke-width="0.7"/><line x1="424.29" y1="267.68" x2="382.89" y2="286.61" stroke="#2a2a36" stroke-width="0.7"/><line x1="435.27" y1="272.57" x2="393.86" y2="291.50" stroke="#2a2a36" stroke-width="0.7"/><line x1="403.64" y1="262.90" x2="394.20" y2="267.22" stroke="#e2e5ff" stroke-width="1.1"/><line x1="403.64" y1="261.40" x2="394.20" y2="265.72" stroke="#14141c" stroke-width="1.7"/><line x1="403.94" y1="261.00" x2="403.94" y2="263.90" stroke="#14141c" stroke-width="1.0"/><line x1="390.70" y1="268.82" x2="381.26" y2="273.13" stroke="#e2e5ff" stroke-width="1.1"/><line x1="390.70" y1="267.32" x2="381.26" y2="271.63" stroke="#14141c" stroke-width="1.7"/><line x1="391.00" y1="266.92" x2="391.00" y2="269.82" stroke="#14141c" stroke-width="1.0"/><line x1="377.76" y1="274.73" x2="368.32" y2="279.05" stroke="#e2e5ff" stroke-width="1.1"/><line x1="377.76" y1="273.23" x2="368.32" y2="277.55" stroke="#14141c" stroke-width="1.7"/><line x1="378.06" y1="272.83" x2="378.06" y2="275.73" stroke="#14141c" stroke-width="1.0"/><line x1="364.82" y1="280.65" x2="355.89" y2="284.73" stroke="#e2e5ff" stroke-width="1.1"/><line x1="364.82" y1="279.15" x2="355.89" y2="283.23" stroke="#14141c" stroke-width="1.7"/><line x1="365.12" y1="278.75" x2="365.12" y2="281.65" stroke="#14141c" stroke-width="1.0"/><line x1="410.96" y1="266.16" x2="401.51" y2="270.48" stroke="#e2e5ff" stroke-width="1.1"/><line x1="410.96" y1="264.66" x2="401.51" y2="268.98" stroke="#14141c" stroke-width="1.7"/><line x1="411.26" y1="264.26" x2="411.26" y2="267.16" stroke="#14141c" stroke-width="1.0"/><line x1="398.02" y1="272.08" x2="388.57" y2="276.39" stroke="#e2e5ff" stroke-width="1.1"/><line x1="398.02" y1="270.58" x2="388.57" y2="274.89" stroke="#14141c" stroke-width="1.7"/><line x1="398.32" y1="270.18" x2="398.32" y2="273.08" stroke="#14141c" stroke-width="1.0"/><line x1="385.08" y1="277.99" x2="375.63" y2="282.31" stroke="#e2e5ff" stroke-width="1.1"/><line x1="385.08" y1="276.49" x2="375.63" y2="280.81" stroke="#14141c" stroke-width="1.7"/><line x1="385.38" y1="276.09" x2="385.38" y2="278.99" stroke="#14141c" stroke-width="1.0"/><line x1="372.14" y1="283.91" x2="363.21" y2="287.99" stroke="#e2e5ff" stroke-width="1.1"/><line x1="372.14" y1="282.41" x2="363.21" y2="286.49" stroke="#14141c" stroke-width="1.7"/><line x1="372.44" y1="282.01" x2="372.44" y2="284.91" stroke="#14141c" stroke-width="1.0"/><line x1="418.28" y1="269.42" x2="408.83" y2="273.74" stroke="#e2e5ff" stroke-width="1.1"/><line x1="418.28" y1="267.92" x2="408.83" y2="272.24" stroke="#14141c" stroke-width="1.7"/><line x1="418.58" y1="267.52" x2="418.58" y2="270.42" stroke="#14141c" stroke-width="1.0"/><line x1="405.34" y1="275.34" x2="395.89" y2="279.65" stroke="#e2e5ff" stroke-width="1.1"/><line x1="405.34" y1="273.84" x2="395.89" y2="278.15" stroke="#14141c" stroke-width="1.7"/><line x1="405.64" y1="273.44" x2="405.64" y2="276.34" stroke="#14141c" stroke-width="1.0"/><line x1="392.40" y1="281.25" x2="382.95" y2="285.57" stroke="#e2e5ff" stroke-width="1.1"/><line x1="392.40" y1="279.75" x2="382.95" y2="284.07" stroke="#14141c" stroke-width="1.7"/><line x1="392.70" y1="279.35" x2="392.70" y2="282.25" stroke="#14141c" stroke-width="1.0"/><line x1="379.46" y1="287.17" x2="370.53" y2="291.25" stroke="#e2e5ff" stroke-width="1.1"/><line x1="379.46" y1="285.67" x2="370.53" y2="289.75" stroke="#14141c" stroke-width="1.7"/><line x1="379.76" y1="285.27" x2="379.76" y2="288.17" stroke="#14141c" stroke-width="1.0"/><line x1="425.60" y1="272.68" x2="416.15" y2="277.00" stroke="#e2e5ff" stroke-width="1.1"/><line x1="425.60" y1="271.18" x2="416.15" y2="275.50" stroke="#14141c" stroke-width="1.7"/><line x1="425.90" y1="270.78" x2="425.90" y2="273.68" stroke="#14141c" stroke-width="1.0"/><line x1="412.66" y1="278.60" x2="403.21" y2="282.92" stroke="#e2e5ff" stroke-width="1.1"/><line x1="412.66" y1="277.10" x2="403.21" y2="281.42" stroke="#14141c" stroke-width="1.7"/><line x1="412.96" y1="276.70" x2="412.96" y2="279.60" stroke="#14141c" stroke-width="1.0"/><line x1="399.72" y1="284.51" x2="390.27" y2="288.83" stroke="#e2e5ff" stroke-width="1.1"/><line x1="399.72" y1="283.01" x2="390.27" y2="287.33" stroke="#14141c" stroke-width="1.7"/><line x1="400.02" y1="282.61" x2="400.02" y2="285.51" stroke="#14141c" stroke-width="1.0"/><line x1="386.78" y1="290.43" x2="377.85" y2="294.51" stroke="#e2e5ff" stroke-width="1.1"/><line x1="386.78" y1="288.93" x2="377.85" y2="293.01" stroke="#14141c" stroke-width="1.7"/><line x1="387.08" y1="288.53" x2="387.08" y2="291.43" stroke="#14141c" stroke-width="1.0"/><line x1="432.91" y1="275.94" x2="423.47" y2="280.26" stroke="#e2e5ff" stroke-width="1.1"/><line x1="432.91" y1="274.44" x2="423.47" y2="278.76" stroke="#14141c" stroke-width="1.7"/><line x1="433.21" y1="274.04" x2="433.21" y2="276.94" stroke="#14141c" stroke-width="1.0"/><line x1="419.97" y1="281.86" x2="410.53" y2="286.18" stroke="#e2e5ff" stroke-width="1.1"/><line x1="419.97" y1="280.36" x2="410.53" y2="284.68" stroke="#14141c" stroke-width="1.7"/><line x1="420.27" y1="279.96" x2="420.27" y2="282.86" stroke="#14141c" stroke-width="1.0"/><line x1="407.03" y1="287.77" x2="397.59" y2="292.09" stroke="#e2e5ff" stroke-width="1.1"/><line x1="407.03" y1="286.27" x2="397.59" y2="290.59" stroke="#14141c" stroke-width="1.7"/><line x1="407.33" y1="285.87" x2="407.33" y2="288.77" stroke="#14141c" stroke-width="1.0"/><line x1="394.09" y1="293.69" x2="385.16" y2="297.77" stroke="#e2e5ff" stroke-width="1.1"/><line x1="394.09" y1="292.19" x2="385.16" y2="296.27" stroke="#14141c" stroke-width="1.7"/><line x1="394.39" y1="291.79" x2="394.39" y2="294.69" stroke="#14141c" stroke-width="1.0"/><line x1="440.23" y1="279.20" x2="430.78" y2="283.52" stroke="#e2e5ff" stroke-width="1.1"/><line x1="440.23" y1="277.70" x2="430.78" y2="282.02" stroke="#14141c" stroke-width="1.7"/><line x1="440.53" y1="277.30" x2="440.53" y2="280.20" stroke="#14141c" stroke-width="1.0"/><line x1="427.29" y1="285.12" x2="417.84" y2="289.44" stroke="#e2e5ff" stroke-width="1.1"/><line x1="427.29" y1="283.62" x2="417.84" y2="287.94" stroke="#14141c" stroke-width="1.7"/><line x1="427.59" y1="283.22" x2="427.59" y2="286.12" stroke="#14141c" stroke-width="1.0"/><line x1="414.35" y1="291.03" x2="404.90" y2="295.35" stroke="#e2e5ff" stroke-width="1.1"/><line x1="414.35" y1="289.53" x2="404.90" y2="293.85" stroke="#14141c" stroke-width="1.7"/><line x1="414.65" y1="289.13" x2="414.65" y2="292.03" stroke="#14141c" stroke-width="1.0"/><line x1="401.41" y1="296.95" x2="392.48" y2="301.03" stroke="#e2e5ff" stroke-width="1.1"/><line x1="401.41" y1="295.45" x2="392.48" y2="299.53" stroke="#14141c" stroke-width="1.7"/><line x1="401.71" y1="295.05" x2="401.71" y2="297.95" stroke="#14141c" stroke-width="1.0"/><line x1="402.85" y1="304.85" x2="402.85" y2="298.85" stroke="#444" stroke-width="0.9"/><polygon points="713.92,209.84 766.19,233.13 714.43,256.79 662.16,233.50" fill="#bcc0ec"/><polygon points="672.51,228.77 724.78,252.06 714.43,256.79 662.16,233.50" fill="#ededed"/><polygon points="678.15,231.28 683.64,233.72 677.94,236.33" fill="#c4c7ef"/><polygon points="685.46,234.54 690.95,236.98 685.26,239.59" fill="#c4c7ef"/><polygon points="692.78,237.80 698.27,240.25 692.58,242.85" fill="#c4c7ef"/><polygon points="700.10,241.06 705.59,243.51 699.89,246.11" fill="#c4c7ef"/><polygon points="707.42,244.32 712.91,246.77 707.21,249.37" fill="#c4c7ef"/><polygon points="714.74,247.58 720.22,250.03 714.53,252.63" fill="#c4c7ef"/><polygon points="757.83,229.40 766.19,233.13 714.43,256.79 706.07,253.06" fill="#cacacc"/><polygon points="757.57,229.29 748.77,233.31 763.58,231.97" fill="#bcc0ec"/><polygon points="744.63,235.20 735.83,239.22 750.64,237.88" fill="#bcc0ec"/><polygon points="731.69,241.12 722.89,245.14 737.70,243.80" fill="#bcc0ec"/><polygon points="718.75,247.03 709.95,251.05 724.76,249.71" fill="#bcc0ec"/><line x1="700.98" y1="215.75" x2="744.89" y2="235.32" stroke="#1e1e28" stroke-width="1.1"/><line x1="688.04" y1="221.67" x2="731.95" y2="241.23" stroke="#1e1e28" stroke-width="1.1"/><line x1="675.10" y1="227.59" x2="719.01" y2="247.15" stroke="#1e1e28" stroke-width="1.1"/><line x1="724.90" y1="214.73" x2="683.49" y2="233.66" stroke="#2a2a36" stroke-width="0.7"/><line x1="735.87" y1="219.62" x2="694.47" y2="238.55" stroke="#2a2a36" stroke-width="0.7"/><line x1="746.85" y1="224.51" x2="705.44" y2="243.44" stroke="#2a2a36" stroke-width="0.7"/><line x1="715.22" y1="214.84" x2="705.78" y2="219.16" stroke="#e2e5ff" stroke-width="1.1"/><line x1="715.22" y1="213.34" x2="705.78" y2="217.66" stroke="#14141c" stroke-width="1.7"/><line x1="715.52" y1="212.94" x2="715.52" y2="215.84" stroke="#14141c" stroke-width="1.0"/><line x1="702.28" y1="220.76" x2="692.84" y2="225.07" stroke="#e2e5ff" stroke-width="1.1"/><line x1="702.28" y1="219.26" x2="692.84" y2="223.57" stroke="#14141c" stroke-width="1.7"/><line x1="702.58" y1="218.86" x2="702.58" y2="221.76" stroke="#14141c" stroke-width="1.0"/><line x1="689.34" y1="226.67" x2="679.90" y2="230.99" stroke="#e2e5ff" stroke-width="1.1"/><line x1="689.34" y1="225.17" x2="679.90" y2="229.49" stroke="#14141c" stroke-width="1.7"/><line x1="689.64" y1="224.77" x2="689.64" y2="227.67" stroke="#14141c" stroke-width="1.0"/><line x1="676.40" y1="232.59" x2="667.47" y2="236.67" stroke="#e2e5ff" stroke-width="1.1"/><line x1="676.40" y1="231.09" x2="667.47" y2="235.17" stroke="#14141c" stroke-width="1.7"/><line x1="676.70" y1="230.69" x2="676.70" y2="233.59" stroke="#14141c" stroke-width="1.0"/><line x1="722.54" y1="218.10" x2="713.09" y2="222.42" stroke="#e2e5ff" stroke-width="1.1"/><line x1="722.54" y1="216.60" x2="713.09" y2="220.92" stroke="#14141c" stroke-width="1.7"/><line x1="722.84" y1="216.20" x2="722.84" y2="219.10" stroke="#14141c" stroke-width="1.0"/><line x1="709.60" y1="224.02" x2="700.15" y2="228.33" stroke="#e2e5ff" stroke-width="1.1"/><line x1="709.60" y1="222.52" x2="700.15" y2="226.83" stroke="#14141c" stroke-width="1.7"/><line x1="709.90" y1="222.12" x2="709.90" y2="225.02" stroke="#14141c" stroke-width="1.0"/><line x1="696.66" y1="229.93" x2="687.21" y2="234.25" stroke="#e2e5ff" stroke-width="1.1"/><line x1="696.66" y1="228.43" x2="687.21" y2="232.75" stroke="#14141c" stroke-width="1.7"/><line x1="696.96" y1="228.03" x2="696.96" y2="230.93" stroke="#14141c" stroke-width="1.0"/><line x1="683.72" y1="235.85" x2="674.79" y2="239.93" stroke="#e2e5ff" stroke-width="1.1"/><line x1="683.72" y1="234.35" x2="674.79" y2="238.43" stroke="#14141c" stroke-width="1.7"/><line x1="684.02" y1="233.95" x2="684.02" y2="236.85" stroke="#14141c" stroke-width="1.0"/><line x1="729.86" y1="221.36" x2="720.41" y2="225.68" stroke="#e2e5ff" stroke-width="1.1"/><line x1="729.86" y1="219.86" x2="720.41" y2="224.18" stroke="#14141c" stroke-width="1.7"/><line x1="730.16" y1="219.46" x2="730.16" y2="222.36" stroke="#14141c" stroke-width="1.0"/><line x1="716.92" y1="227.28" x2="707.47" y2="231.59" stroke="#e2e5ff" stroke-width="1.1"/><line x1="716.92" y1="225.78" x2="707.47" y2="230.09" stroke="#14141c" stroke-width="1.7"/><line x1="717.22" y1="225.38" x2="717.22" y2="228.28" stroke="#14141c" stroke-width="1.0"/><line x1="703.98" y1="233.19" x2="694.53" y2="237.51" stroke="#e2e5ff" stroke-width="1.1"/><line x1="703.98" y1="231.69" x2="694.53" y2="236.01" stroke="#14141c" stroke-width="1.7"/><line x1="704.28" y1="231.29" x2="704.28" y2="234.19" stroke="#14141c" stroke-width="1.0"/><line x1="691.04" y1="239.11" x2="682.11" y2="243.19" stroke="#e2e5ff" stroke-width="1.1"/><line x1="691.04" y1="237.61" x2="682.11" y2="241.69" stroke="#14141c" stroke-width="1.7"/><line x1="691.34" y1="237.21" x2="691.34" y2="240.11" stroke="#14141c" stroke-width="1.0"/><line x1="737.18" y1="224.62" x2="727.73" y2="228.94" stroke="#e2e5ff" stroke-width="1.1"/><line x1="737.18" y1="223.12" x2="727.73" y2="227.44" stroke="#14141c" stroke-width="1.7"/><line x1="737.48" y1="222.72" x2="737.48" y2="225.62" stroke="#14141c" stroke-width="1.0"/><line x1="724.24" y1="230.54" x2="714.79" y2="234.86" stroke="#e2e5ff" stroke-width="1.1"/><line x1="724.24" y1="229.04" x2="714.79" y2="233.36" stroke="#14141c" stroke-width="1.7"/><line x1="724.54" y1="228.64" x2="724.54" y2="231.54" stroke="#14141c" stroke-width="1.0"/><line x1="711.30" y1="236.45" x2="701.85" y2="240.77" stroke="#e2e5ff" stroke-width="1.1"/><line x1="711.30" y1="234.95" x2="701.85" y2="239.27" stroke="#14141c" stroke-width="1.7"/><line x1="711.60" y1="234.55" x2="711.60" y2="237.45" stroke="#14141c" stroke-width="1.0"/><line x1="698.36" y1="242.37" x2="689.43" y2="246.45" stroke="#e2e5ff" stroke-width="1.1"/><line x1="698.36" y1="240.87" x2="689.43" y2="244.95" stroke="#14141c" stroke-width="1.7"/><line x1="698.66" y1="240.47" x2="698.66" y2="243.37" stroke="#14141c" stroke-width="1.0"/><line x1="744.49" y1="227.88" x2="735.05" y2="232.20" stroke="#e2e5ff" stroke-width="1.1"/><line x1="744.49" y1="226.38" x2="735.05" y2="230.70" stroke="#14141c" stroke-width="1.7"/><line x1="744.79" y1="225.98" x2="744.79" y2="228.88" stroke="#14141c" stroke-width="1.0"/><line x1="731.55" y1="233.80" x2="722.11" y2="238.12" stroke="#e2e5ff" stroke-width="1.1"/><line x1="731.55" y1="232.30" x2="722.11" y2="236.62" stroke="#14141c" stroke-width="1.7"/><line x1="731.85" y1="231.90" x2="731.85" y2="234.80" stroke="#14141c" stroke-width="1.0"/><line x1="718.61" y1="239.71" x2="709.17" y2="244.03" stroke="#e2e5ff" stroke-width="1.1"/><line x1="718.61" y1="238.21" x2="709.17" y2="242.53" stroke="#14141c" stroke-width="1.7"/><line x1="718.91" y1="237.81" x2="718.91" y2="240.71" stroke="#14141c" stroke-width="1.0"/><line x1="705.67" y1="245.63" x2="696.74" y2="249.71" stroke="#e2e5ff" stroke-width="1.1"/><line x1="705.67" y1="244.13" x2="696.74" y2="248.21" stroke="#14141c" stroke-width="1.7"/><line x1="705.97" y1="243.73" x2="705.97" y2="246.63" stroke="#14141c" stroke-width="1.0"/><line x1="751.81" y1="231.14" x2="742.36" y2="235.46" stroke="#e2e5ff" stroke-width="1.1"/><line x1="751.81" y1="229.64" x2="742.36" y2="233.96" stroke="#14141c" stroke-width="1.7"/><line x1="752.11" y1="229.24" x2="752.11" y2="232.14" stroke="#14141c" stroke-width="1.0"/><line x1="738.87" y1="237.06" x2="729.42" y2="241.38" stroke="#e2e5ff" stroke-width="1.1"/><line x1="738.87" y1="235.56" x2="729.42" y2="239.88" stroke="#14141c" stroke-width="1.7"/><line x1="739.17" y1="235.16" x2="739.17" y2="238.06" stroke="#14141c" stroke-width="1.0"/><line x1="725.93" y1="242.97" x2="716.48" y2="247.29" stroke="#e2e5ff" stroke-width="1.1"/><line x1="725.93" y1="241.47" x2="716.48" y2="245.79" stroke="#14141c" stroke-width="1.7"/><line x1="726.23" y1="241.07" x2="726.23" y2="243.97" stroke="#14141c" stroke-width="1.0"/><line x1="712.99" y1="248.89" x2="704.06" y2="252.97" stroke="#e2e5ff" stroke-width="1.1"/><line x1="712.99" y1="247.39" x2="704.06" y2="251.47" stroke="#14141c" stroke-width="1.7"/><line x1="713.29" y1="246.99" x2="713.29" y2="249.89" stroke="#14141c" stroke-width="1.0"/><line x1="714.43" y1="256.79" x2="714.43" y2="250.79" stroke="#444" stroke-width="0.9"/><polygon points="610.40,257.16 662.67,280.45 610.91,304.11 558.64,280.82" fill="#bcc0ec"/><polygon points="568.99,276.09 621.26,299.38 610.91,304.11 558.64,280.82" fill="#ededed"/><polygon points="574.63,278.60 580.12,281.04 574.42,283.65" fill="#c4c7ef"/><polygon points="581.94,281.86 587.43,284.30 581.74,286.91" fill="#c4c7ef"/><polygon points="589.26,285.12 594.75,287.57 589.06,290.17" fill="#c4c7ef"/><polygon points="596.58,288.38 602.07,290.83 596.37,293.43" fill="#c4c7ef"/><polygon points="603.90,291.64 609.39,294.09 603.69,296.69" fill="#c4c7ef"/><polygon points="611.22,294.90 616.70,297.35 611.01,299.95" fill="#c4c7ef"/><polygon points="654.31,276.72 662.67,280.45 610.91,304.11 602.55,300.38" fill="#cacacc"/><polygon points="654.05,276.61 645.25,280.63 660.06,279.29" fill="#bcc0ec"/><polygon points="641.11,282.52 632.31,286.54 647.12,285.20" fill="#bcc0ec"/><polygon points="628.17,288.44 619.37,292.46 634.18,291.12" fill="#bcc0ec"/><polygon points="615.23,294.35 606.43,298.37 621.24,297.03" fill="#bcc0ec"/><line x1="597.46" y1="263.07" x2="641.37" y2="282.64" stroke="#1e1e28" stroke-width="1.1"/><line x1="584.52" y1="268.99" x2="628.43" y2="288.55" stroke="#1e1e28" stroke-width="1.1"/><line x1="571.58" y1="274.90" x2="615.49" y2="294.47" stroke="#1e1e28" stroke-width="1.1"/><line x1="621.38" y1="262.05" x2="579.97" y2="280.98" stroke="#2a2a36" stroke-width="0.7"/><line x1="632.35" y1="266.94" x2="590.95" y2="285.87" stroke="#2a2a36" stroke-width="0.7"/><line x1="643.33" y1="271.83" x2="601.92" y2="290.76" stroke="#2a2a36" stroke-width="0.7"/><line x1="611.70" y1="262.16" x2="602.26" y2="266.48" stroke="#e2e5ff" stroke-width="1.1"/><line x1="611.70" y1="260.66" x2="602.26" y2="264.98" stroke="#14141c" stroke-width="1.7"/><line x1="612.00" y1="260.26" x2="612.00" y2="263.16" stroke="#14141c" stroke-width="1.0"/><line x1="598.76" y1="268.08" x2="589.32" y2="272.39" stroke="#e2e5ff" stroke-width="1.1"/><line x1="598.76" y1="266.58" x2="589.32" y2="270.89" stroke="#14141c" stroke-width="1.7"/><line x1="599.06" y1="266.18" x2="599.06" y2="269.08" stroke="#14141c" stroke-width="1.0"/><line x1="585.82" y1="273.99" x2="576.38" y2="278.31" stroke="#e2e5ff" stroke-width="1.1"/><line x1="585.82" y1="272.49" x2="576.38" y2="276.81" stroke="#14141c" stroke-width="1.7"/><line x1="586.12" y1="272.09" x2="586.12" y2="274.99" stroke="#14141c" stroke-width="1.0"/><line x1="572.88" y1="279.91" x2="563.95" y2="283.99" stroke="#e2e5ff" stroke-width="1.1"/><line x1="572.88" y1="278.41" x2="563.95" y2="282.49" stroke="#14141c" stroke-width="1.7"/><line x1="573.18" y1="278.01" x2="573.18" y2="280.91" stroke="#14141c" stroke-width="1.0"/><line x1="619.02" y1="265.42" x2="609.57" y2="269.74" stroke="#e2e5ff" stroke-width="1.1"/><line x1="619.02" y1="263.92" x2="609.57" y2="268.24" stroke="#14141c" stroke-width="1.7"/><line x1="619.32" y1="263.52" x2="619.32" y2="266.42" stroke="#14141c" stroke-width="1.0"/><line x1="606.08" y1="271.34" x2="596.63" y2="275.65" stroke="#e2e5ff" stroke-width="1.1"/><line x1="606.08" y1="269.84" x2="596.63" y2="274.15" stroke="#14141c" stroke-width="1.7"/><line x1="606.38" y1="269.44" x2="606.38" y2="272.34" stroke="#14141c" stroke-width="1.0"/><line x1="593.14" y1="277.25" x2="583.69" y2="281.57" stroke="#e2e5ff" stroke-width="1.1"/><line x1="593.14" y1="275.75" x2="583.69" y2="280.07" stroke="#14141c" stroke-width="1.7"/><line x1="593.44" y1="275.35" x2="593.44" y2="278.25" stroke="#14141c" stroke-width="1.0"/><line x1="580.20" y1="283.17" x2="571.27" y2="287.25" stroke="#e2e5ff" stroke-width="1.1"/><line x1="580.20" y1="281.67" x2="571.27" y2="285.75" stroke="#14141c" stroke-width="1.7"/><line x1="580.50" y1="281.27" x2="580.50" y2="284.17" stroke="#14141c" stroke-width="1.0"/><line x1="626.34" y1="268.68" x2="616.89" y2="273.00" stroke="#e2e5ff" stroke-width="1.1"/><line x1="626.34" y1="267.18" x2="616.89" y2="271.50" stroke="#14141c" stroke-width="1.7"/><line x1="626.64" y1="266.78" x2="626.64" y2="269.68" stroke="#14141c" stroke-width="1.0"/><line x1="613.40" y1="274.60" x2="603.95" y2="278.91" stroke="#e2e5ff" stroke-width="1.1"/><line x1="613.40" y1="273.10" x2="603.95" y2="277.41" stroke="#14141c" stroke-width="1.7"/><line x1="613.70" y1="272.70" x2="613.70" y2="275.60" stroke="#14141c" stroke-width="1.0"/><line x1="600.46" y1="280.51" x2="591.01" y2="284.83" stroke="#e2e5ff" stroke-width="1.1"/><line x1="600.46" y1="279.01" x2="591.01" y2="283.33" stroke="#14141c" stroke-width="1.7"/><line x1="600.76" y1="278.61" x2="600.76" y2="281.51" stroke="#14141c" stroke-width="1.0"/><line x1="587.52" y1="286.43" x2="578.59" y2="290.51" stroke="#e2e5ff" stroke-width="1.1"/><line x1="587.52" y1="284.93" x2="578.59" y2="289.01" stroke="#14141c" stroke-width="1.7"/><line x1="587.82" y1="284.53" x2="587.82" y2="287.43" stroke="#14141c" stroke-width="1.0"/><line x1="633.66" y1="271.94" x2="624.21" y2="276.26" stroke="#e2e5ff" stroke-width="1.1"/><line x1="633.66" y1="270.44" x2="624.21" y2="274.76" stroke="#14141c" stroke-width="1.7"/><line x1="633.96" y1="270.04" x2="633.96" y2="272.94" stroke="#14141c" stroke-width="1.0"/><line x1="620.72" y1="277.86" x2="611.27" y2="282.18" stroke="#e2e5ff" stroke-width="1.1"/><line x1="620.72" y1="276.36" x2="611.27" y2="280.68" stroke="#14141c" stroke-width="1.7"/><line x1="621.02" y1="275.96" x2="621.02" y2="278.86" stroke="#14141c" stroke-width="1.0"/><line x1="607.78" y1="283.77" x2="598.33" y2="288.09" stroke="#e2e5ff" stroke-width="1.1"/><line x1="607.78" y1="282.27" x2="598.33" y2="286.59" stroke="#14141c" stroke-width="1.7"/><line x1="608.08" y1="281.87" x2="608.08" y2="284.77" stroke="#14141c" stroke-width="1.0"/><line x1="594.84" y1="289.69" x2="585.91" y2="293.77" stroke="#e2e5ff" stroke-width="1.1"/><line x1="594.84" y1="288.19" x2="585.91" y2="292.27" stroke="#14141c" stroke-width="1.7"/><line x1="595.14" y1="287.79" x2="595.14" y2="290.69" stroke="#14141c" stroke-width="1.0"/><line x1="640.97" y1="275.20" x2="631.53" y2="279.52" stroke="#e2e5ff" stroke-width="1.1"/><line x1="640.97" y1="273.70" x2="631.53" y2="278.02" stroke="#14141c" stroke-width="1.7"/><line x1="641.27" y1="273.30" x2="641.27" y2="276.20" stroke="#14141c" stroke-width="1.0"/><line x1="628.03" y1="281.12" x2="618.59" y2="285.44" stroke="#e2e5ff" stroke-width="1.1"/><line x1="628.03" y1="279.62" x2="618.59" y2="283.94" stroke="#14141c" stroke-width="1.7"/><line x1="628.33" y1="279.22" x2="628.33" y2="282.12" stroke="#14141c" stroke-width="1.0"/><line x1="615.09" y1="287.03" x2="605.65" y2="291.35" stroke="#e2e5ff" stroke-width="1.1"/><line x1="615.09" y1="285.53" x2="605.65" y2="289.85" stroke="#14141c" stroke-width="1.7"/><line x1="615.39" y1="285.13" x2="615.39" y2="288.03" stroke="#14141c" stroke-width="1.0"/><line x1="602.15" y1="292.95" x2="593.22" y2="297.03" stroke="#e2e5ff" stroke-width="1.1"/><line x1="602.15" y1="291.45" x2="593.22" y2="295.53" stroke="#14141c" stroke-width="1.7"/><line x1="602.45" y1="291.05" x2="602.45" y2="293.95" stroke="#14141c" stroke-width="1.0"/><line x1="648.29" y1="278.46" x2="638.84" y2="282.78" stroke="#e2e5ff" stroke-width="1.1"/><line x1="648.29" y1="276.96" x2="638.84" y2="281.28" stroke="#14141c" stroke-width="1.7"/><line x1="648.59" y1="276.56" x2="648.59" y2="279.46" stroke="#14141c" stroke-width="1.0"/><line x1="635.35" y1="284.38" x2="625.90" y2="288.70" stroke="#e2e5ff" stroke-width="1.1"/><line x1="635.35" y1="282.88" x2="625.90" y2="287.20" stroke="#14141c" stroke-width="1.7"/><line x1="635.65" y1="282.48" x2="635.65" y2="285.38" stroke="#14141c" stroke-width="1.0"/><line x1="622.41" y1="290.29" x2="612.96" y2="294.61" stroke="#e2e5ff" stroke-width="1.1"/><line x1="622.41" y1="288.79" x2="612.96" y2="293.11" stroke="#14141c" stroke-width="1.7"/><line x1="622.71" y1="288.39" x2="622.71" y2="291.29" stroke="#14141c" stroke-width="1.0"/><line x1="609.47" y1="296.21" x2="600.54" y2="300.29" stroke="#e2e5ff" stroke-width="1.1"/><line x1="609.47" y1="294.71" x2="600.54" y2="298.79" stroke="#14141c" stroke-width="1.7"/><line x1="609.77" y1="294.31" x2="609.77" y2="297.21" stroke="#14141c" stroke-width="1.0"/><line x1="610.91" y1="304.11" x2="610.91" y2="298.11" stroke="#444" stroke-width="0.9"/><polygon points="506.88,304.48 559.15,327.77 507.39,351.43 455.12,328.14" fill="#bcc0ec"/><polygon points="465.47,323.41 517.74,346.70 507.39,351.43 455.12,328.14" fill="#ededed"/><polygon points="471.11,325.92 476.60,328.36 470.90,330.97" fill="#c4c7ef"/><polygon points="478.42,329.18 483.91,331.62 478.22,334.23" fill="#c4c7ef"/><polygon points="485.74,332.44 491.23,334.89 485.54,337.49" fill="#c4c7ef"/><polygon points="493.06,335.70 498.55,338.15 492.85,340.75" fill="#c4c7ef"/><polygon points="500.38,338.96 505.87,341.41 500.17,344.01" fill="#c4c7ef"/><polygon points="507.70,342.22 513.18,344.67 507.49,347.27" fill="#c4c7ef"/><polygon points="550.79,324.04 559.15,327.77 507.39,351.43 499.03,347.70" fill="#cacacc"/><polygon points="550.53,323.93 541.73,327.95 556.54,326.61" fill="#bcc0ec"/><polygon points="537.59,329.84 528.79,333.86 543.60,332.52" fill="#bcc0ec"/><polygon points="524.65,335.76 515.85,339.78 530.66,338.44" fill="#bcc0ec"/><polygon points="511.71,341.67 502.91,345.69 517.72,344.35" fill="#bcc0ec"/><line x1="493.94" y1="310.39" x2="537.85" y2="329.96" stroke="#1e1e28" stroke-width="1.1"/><line x1="481.00" y1="316.31" x2="524.91" y2="335.87" stroke="#1e1e28" stroke-width="1.1"/><line x1="468.06" y1="322.23" x2="511.97" y2="341.79" stroke="#1e1e28" stroke-width="1.1"/><line x1="517.86" y1="309.37" x2="476.45" y2="328.30" stroke="#2a2a36" stroke-width="0.7"/><line x1="528.83" y1="314.26" x2="487.43" y2="333.19" stroke="#2a2a36" stroke-width="0.7"/><line x1="539.81" y1="319.15" x2="498.40" y2="338.08" stroke="#2a2a36" stroke-width="0.7"/><line x1="508.18" y1="309.48" x2="498.74" y2="313.80" stroke="#e2e5ff" stroke-width="1.1"/><line x1="508.18" y1="307.98" x2="498.74" y2="312.30" stroke="#14141c" stroke-width="1.7"/><line x1="508.48" y1="307.58" x2="508.48" y2="310.48" stroke="#14141c" stroke-width="1.0"/><line x1="495.24" y1="315.40" x2="485.80" y2="319.71" stroke="#e2e5ff" stroke-width="1.1"/><line x1="495.24" y1="313.90" x2="485.80" y2="318.21" stroke="#14141c" stroke-width="1.7"/><line x1="495.54" y1="313.50" x2="495.54" y2="316.40" stroke="#14141c" stroke-width="1.0"/><line x1="482.30" y1="321.31" x2="472.86" y2="325.63" stroke="#e2e5ff" stroke-width="1.1"/><line x1="482.30" y1="319.81" x2="472.86" y2="324.13" stroke="#14141c" stroke-width="1.7"/><line x1="482.60" y1="319.41" x2="482.60" y2="322.31" stroke="#14141c" stroke-width="1.0"/><line x1="469.36" y1="327.23" x2="460.43" y2="331.31" stroke="#e2e5ff" stroke-width="1.1"/><line x1="469.36" y1="325.73" x2="460.43" y2="329.81" stroke="#14141c" stroke-width="1.7"/><line x1="469.66" y1="325.33" x2="469.66" y2="328.23" stroke="#14141c" stroke-width="1.0"/><line x1="515.50" y1="312.74" x2="506.05" y2="317.06" stroke="#e2e5ff" stroke-width="1.1"/><line x1="515.50" y1="311.24" x2="506.05" y2="315.56" stroke="#14141c" stroke-width="1.7"/><line x1="515.80" y1="310.84" x2="515.80" y2="313.74" stroke="#14141c" stroke-width="1.0"/><line x1="502.56" y1="318.66" x2="493.11" y2="322.97" stroke="#e2e5ff" stroke-width="1.1"/><line x1="502.56" y1="317.16" x2="493.11" y2="321.47" stroke="#14141c" stroke-width="1.7"/><line x1="502.86" y1="316.76" x2="502.86" y2="319.66" stroke="#14141c" stroke-width="1.0"/><line x1="489.62" y1="324.57" x2="480.17" y2="328.89" stroke="#e2e5ff" stroke-width="1.1"/><line x1="489.62" y1="323.07" x2="480.17" y2="327.39" stroke="#14141c" stroke-width="1.7"/><line x1="489.92" y1="322.67" x2="489.92" y2="325.57" stroke="#14141c" stroke-width="1.0"/><line x1="476.68" y1="330.49" x2="467.75" y2="334.57" stroke="#e2e5ff" stroke-width="1.1"/><line x1="476.68" y1="328.99" x2="467.75" y2="333.07" stroke="#14141c" stroke-width="1.7"/><line x1="476.98" y1="328.59" x2="476.98" y2="331.49" stroke="#14141c" stroke-width="1.0"/><line x1="522.82" y1="316.00" x2="513.37" y2="320.32" stroke="#e2e5ff" stroke-width="1.1"/><line x1="522.82" y1="314.50" x2="513.37" y2="318.82" stroke="#14141c" stroke-width="1.7"/><line x1="523.12" y1="314.10" x2="523.12" y2="317.00" stroke="#14141c" stroke-width="1.0"/><line x1="509.88" y1="321.92" x2="500.43" y2="326.23" stroke="#e2e5ff" stroke-width="1.1"/><line x1="509.88" y1="320.42" x2="500.43" y2="324.73" stroke="#14141c" stroke-width="1.7"/><line x1="510.18" y1="320.02" x2="510.18" y2="322.92" stroke="#14141c" stroke-width="1.0"/><line x1="496.94" y1="327.83" x2="487.49" y2="332.15" stroke="#e2e5ff" stroke-width="1.1"/><line x1="496.94" y1="326.33" x2="487.49" y2="330.65" stroke="#14141c" stroke-width="1.7"/><line x1="497.24" y1="325.93" x2="497.24" y2="328.83" stroke="#14141c" stroke-width="1.0"/><line x1="484.00" y1="333.75" x2="475.07" y2="337.83" stroke="#e2e5ff" stroke-width="1.1"/><line x1="484.00" y1="332.25" x2="475.07" y2="336.33" stroke="#14141c" stroke-width="1.7"/><line x1="484.30" y1="331.85" x2="484.30" y2="334.75" stroke="#14141c" stroke-width="1.0"/><line x1="530.14" y1="319.26" x2="520.69" y2="323.58" stroke="#e2e5ff" stroke-width="1.1"/><line x1="530.14" y1="317.76" x2="520.69" y2="322.08" stroke="#14141c" stroke-width="1.7"/><line x1="530.44" y1="317.36" x2="530.44" y2="320.26" stroke="#14141c" stroke-width="1.0"/><line x1="517.20" y1="325.18" x2="507.75" y2="329.50" stroke="#e2e5ff" stroke-width="1.1"/><line x1="517.20" y1="323.68" x2="507.75" y2="328.00" stroke="#14141c" stroke-width="1.7"/><line x1="517.50" y1="323.28" x2="517.50" y2="326.18" stroke="#14141c" stroke-width="1.0"/><line x1="504.26" y1="331.09" x2="494.81" y2="335.41" stroke="#e2e5ff" stroke-width="1.1"/><line x1="504.26" y1="329.59" x2="494.81" y2="333.91" stroke="#14141c" stroke-width="1.7"/><line x1="504.56" y1="329.19" x2="504.56" y2="332.09" stroke="#14141c" stroke-width="1.0"/><line x1="491.32" y1="337.01" x2="482.39" y2="341.09" stroke="#e2e5ff" stroke-width="1.1"/><line x1="491.32" y1="335.51" x2="482.39" y2="339.59" stroke="#14141c" stroke-width="1.7"/><line x1="491.62" y1="335.11" x2="491.62" y2="338.01" stroke="#14141c" stroke-width="1.0"/><line x1="537.45" y1="322.52" x2="528.01" y2="326.84" stroke="#e2e5ff" stroke-width="1.1"/><line x1="537.45" y1="321.02" x2="528.01" y2="325.34" stroke="#14141c" stroke-width="1.7"/><line x1="537.75" y1="320.62" x2="537.75" y2="323.52" stroke="#14141c" stroke-width="1.0"/><line x1="524.51" y1="328.44" x2="515.07" y2="332.76" stroke="#e2e5ff" stroke-width="1.1"/><line x1="524.51" y1="326.94" x2="515.07" y2="331.26" stroke="#14141c" stroke-width="1.7"/><line x1="524.81" y1="326.54" x2="524.81" y2="329.44" stroke="#14141c" stroke-width="1.0"/><line x1="511.57" y1="334.35" x2="502.13" y2="338.67" stroke="#e2e5ff" stroke-width="1.1"/><line x1="511.57" y1="332.85" x2="502.13" y2="337.17" stroke="#14141c" stroke-width="1.7"/><line x1="511.87" y1="332.45" x2="511.87" y2="335.35" stroke="#14141c" stroke-width="1.0"/><line x1="498.63" y1="340.27" x2="489.70" y2="344.35" stroke="#e2e5ff" stroke-width="1.1"/><line x1="498.63" y1="338.77" x2="489.70" y2="342.85" stroke="#14141c" stroke-width="1.7"/><line x1="498.93" y1="338.37" x2="498.93" y2="341.27" stroke="#14141c" stroke-width="1.0"/><line x1="544.77" y1="325.78" x2="535.32" y2="330.10" stroke="#e2e5ff" stroke-width="1.1"/><line x1="544.77" y1="324.28" x2="535.32" y2="328.60" stroke="#14141c" stroke-width="1.7"/><line x1="545.07" y1="323.88" x2="545.07" y2="326.78" stroke="#14141c" stroke-width="1.0"/><line x1="531.83" y1="331.70" x2="522.38" y2="336.02" stroke="#e2e5ff" stroke-width="1.1"/><line x1="531.83" y1="330.20" x2="522.38" y2="334.52" stroke="#14141c" stroke-width="1.7"/><line x1="532.13" y1="329.80" x2="532.13" y2="332.70" stroke="#14141c" stroke-width="1.0"/><line x1="518.89" y1="337.61" x2="509.44" y2="341.93" stroke="#e2e5ff" stroke-width="1.1"/><line x1="518.89" y1="336.11" x2="509.44" y2="340.43" stroke="#14141c" stroke-width="1.7"/><line x1="519.19" y1="335.71" x2="519.19" y2="338.61" stroke="#14141c" stroke-width="1.0"/><line x1="505.95" y1="343.53" x2="497.02" y2="347.61" stroke="#e2e5ff" stroke-width="1.1"/><line x1="505.95" y1="342.03" x2="497.02" y2="346.11" stroke="#14141c" stroke-width="1.7"/><line x1="506.25" y1="341.63" x2="506.25" y2="344.53" stroke="#14141c" stroke-width="1.0"/><line x1="507.39" y1="351.43" x2="507.39" y2="345.43" stroke="#444" stroke-width="0.9"/><polygon points="818.46,256.42 870.73,279.71 818.97,303.37 766.70,280.08" fill="#bcc0ec"/><polygon points="777.05,275.35 829.32,298.64 818.97,303.37 766.70,280.08" fill="#ededed"/><polygon points="782.69,277.86 788.18,280.30 782.48,282.91" fill="#c4c7ef"/><polygon points="790.00,281.12 795.49,283.56 789.80,286.17" fill="#c4c7ef"/><polygon points="797.32,284.38 802.81,286.83 797.12,289.43" fill="#c4c7ef"/><polygon points="804.64,287.64 810.13,290.09 804.43,292.69" fill="#c4c7ef"/><polygon points="811.96,290.90 817.45,293.35 811.75,295.95" fill="#c4c7ef"/><polygon points="819.28,294.16 824.76,296.61 819.07,299.21" fill="#c4c7ef"/><polygon points="862.37,275.98 870.73,279.71 818.97,303.37 810.61,299.64" fill="#cacacc"/><polygon points="862.11,275.87 853.31,279.89 868.12,278.55" fill="#bcc0ec"/><polygon points="849.17,281.78 840.37,285.80 855.18,284.46" fill="#bcc0ec"/><polygon points="836.23,287.70 827.43,291.72 842.24,290.38" fill="#bcc0ec"/><polygon points="823.29,293.61 814.49,297.63 829.30,296.29" fill="#bcc0ec"/><line x1="805.52" y1="262.33" x2="849.43" y2="281.90" stroke="#1e1e28" stroke-width="1.1"/><line x1="792.58" y1="268.25" x2="836.49" y2="287.81" stroke="#1e1e28" stroke-width="1.1"/><line x1="779.64" y1="274.16" x2="823.55" y2="293.73" stroke="#1e1e28" stroke-width="1.1"/><line x1="829.44" y1="261.31" x2="788.03" y2="280.24" stroke="#2a2a36" stroke-width="0.7"/><line x1="840.41" y1="266.20" x2="799.01" y2="285.13" stroke="#2a2a36" stroke-width="0.7"/><line x1="851.39" y1="271.09" x2="809.98" y2="290.02" stroke="#2a2a36" stroke-width="0.7"/><line x1="819.76" y1="261.42" x2="810.32" y2="265.74" stroke="#e2e5ff" stroke-width="1.1"/><line x1="819.76" y1="259.92" x2="810.32" y2="264.24" stroke="#14141c" stroke-width="1.7"/><line x1="820.06" y1="259.52" x2="820.06" y2="262.42" stroke="#14141c" stroke-width="1.0"/><line x1="806.82" y1="267.34" x2="797.38" y2="271.65" stroke="#e2e5ff" stroke-width="1.1"/><line x1="806.82" y1="265.84" x2="797.38" y2="270.15" stroke="#14141c" stroke-width="1.7"/><line x1="807.12" y1="265.44" x2="807.12" y2="268.34" stroke="#14141c" stroke-width="1.0"/><line x1="793.88" y1="273.25" x2="784.44" y2="277.57" stroke="#e2e5ff" stroke-width="1.1"/><line x1="793.88" y1="271.75" x2="784.44" y2="276.07" stroke="#14141c" stroke-width="1.7"/><line x1="794.18" y1="271.35" x2="794.18" y2="274.25" stroke="#14141c" stroke-width="1.0"/><line x1="780.94" y1="279.17" x2="772.01" y2="283.25" stroke="#e2e5ff" stroke-width="1.1"/><line x1="780.94" y1="277.67" x2="772.01" y2="281.75" stroke="#14141c" stroke-width="1.7"/><line x1="781.24" y1="277.27" x2="781.24" y2="280.17" stroke="#14141c" stroke-width="1.0"/><line x1="827.08" y1="264.68" x2="817.63" y2="269.00" stroke="#e2e5ff" stroke-width="1.1"/><line x1="827.08" y1="263.18" x2="817.63" y2="267.50" stroke="#14141c" stroke-width="1.7"/><line x1="827.38" y1="262.78" x2="827.38" y2="265.68" stroke="#14141c" stroke-width="1.0"/><line x1="814.14" y1="270.60" x2="804.69" y2="274.91" stroke="#e2e5ff" stroke-width="1.1"/><line x1="814.14" y1="269.10" x2="804.69" y2="273.41" stroke="#14141c" stroke-width="1.7"/><line x1="814.44" y1="268.70" x2="814.44" y2="271.60" stroke="#14141c" stroke-width="1.0"/><line x1="801.20" y1="276.51" x2="791.75" y2="280.83" stroke="#e2e5ff" stroke-width="1.1"/><line x1="801.20" y1="275.01" x2="791.75" y2="279.33" stroke="#14141c" stroke-width="1.7"/><line x1="801.50" y1="274.61" x2="801.50" y2="277.51" stroke="#14141c" stroke-width="1.0"/><line x1="788.26" y1="282.43" x2="779.33" y2="286.51" stroke="#e2e5ff" stroke-width="1.1"/><line x1="788.26" y1="280.93" x2="779.33" y2="285.01" stroke="#14141c" stroke-width="1.7"/><line x1="788.56" y1="280.53" x2="788.56" y2="283.43" stroke="#14141c" stroke-width="1.0"/><line x1="834.40" y1="267.94" x2="824.95" y2="272.26" stroke="#e2e5ff" stroke-width="1.1"/><line x1="834.40" y1="266.44" x2="824.95" y2="270.76" stroke="#14141c" stroke-width="1.7"/><line x1="834.70" y1="266.04" x2="834.70" y2="268.94" stroke="#14141c" stroke-width="1.0"/><line x1="821.46" y1="273.86" x2="812.01" y2="278.17" stroke="#e2e5ff" stroke-width="1.1"/><line x1="821.46" y1="272.36" x2="812.01" y2="276.67" stroke="#14141c" stroke-width="1.7"/><line x1="821.76" y1="271.96" x2="821.76" y2="274.86" stroke="#14141c" stroke-width="1.0"/><line x1="808.52" y1="279.77" x2="799.07" y2="284.09" stroke="#e2e5ff" stroke-width="1.1"/><line x1="808.52" y1="278.27" x2="799.07" y2="282.59" stroke="#14141c" stroke-width="1.7"/><line x1="808.82" y1="277.87" x2="808.82" y2="280.77" stroke="#14141c" stroke-width="1.0"/><line x1="795.58" y1="285.69" x2="786.65" y2="289.77" stroke="#e2e5ff" stroke-width="1.1"/><line x1="795.58" y1="284.19" x2="786.65" y2="288.27" stroke="#14141c" stroke-width="1.7"/><line x1="795.88" y1="283.79" x2="795.88" y2="286.69" stroke="#14141c" stroke-width="1.0"/><line x1="841.72" y1="271.20" x2="832.27" y2="275.52" stroke="#e2e5ff" stroke-width="1.1"/><line x1="841.72" y1="269.70" x2="832.27" y2="274.02" stroke="#14141c" stroke-width="1.7"/><line x1="842.02" y1="269.30" x2="842.02" y2="272.20" stroke="#14141c" stroke-width="1.0"/><line x1="828.78" y1="277.12" x2="819.33" y2="281.44" stroke="#e2e5ff" stroke-width="1.1"/><line x1="828.78" y1="275.62" x2="819.33" y2="279.94" stroke="#14141c" stroke-width="1.7"/><line x1="829.08" y1="275.22" x2="829.08" y2="278.12" stroke="#14141c" stroke-width="1.0"/><line x1="815.84" y1="283.03" x2="806.39" y2="287.35" stroke="#e2e5ff" stroke-width="1.1"/><line x1="815.84" y1="281.53" x2="806.39" y2="285.85" stroke="#14141c" stroke-width="1.7"/><line x1="816.14" y1="281.13" x2="816.14" y2="284.03" stroke="#14141c" stroke-width="1.0"/><line x1="802.90" y1="288.95" x2="793.97" y2="293.03" stroke="#e2e5ff" stroke-width="1.1"/><line x1="802.90" y1="287.45" x2="793.97" y2="291.53" stroke="#14141c" stroke-width="1.7"/><line x1="803.20" y1="287.05" x2="803.20" y2="289.95" stroke="#14141c" stroke-width="1.0"/><line x1="849.03" y1="274.46" x2="839.59" y2="278.78" stroke="#e2e5ff" stroke-width="1.1"/><line x1="849.03" y1="272.96" x2="839.59" y2="277.28" stroke="#14141c" stroke-width="1.7"/><line x1="849.33" y1="272.56" x2="849.33" y2="275.46" stroke="#14141c" stroke-width="1.0"/><line x1="836.09" y1="280.38" x2="826.65" y2="284.70" stroke="#e2e5ff" stroke-width="1.1"/><line x1="836.09" y1="278.88" x2="826.65" y2="283.20" stroke="#14141c" stroke-width="1.7"/><line x1="836.39" y1="278.48" x2="836.39" y2="281.38" stroke="#14141c" stroke-width="1.0"/><line x1="823.15" y1="286.29" x2="813.71" y2="290.61" stroke="#e2e5ff" stroke-width="1.1"/><line x1="823.15" y1="284.79" x2="813.71" y2="289.11" stroke="#14141c" stroke-width="1.7"/><line x1="823.45" y1="284.39" x2="823.45" y2="287.29" stroke="#14141c" stroke-width="1.0"/><line x1="810.21" y1="292.21" x2="801.28" y2="296.29" stroke="#e2e5ff" stroke-width="1.1"/><line x1="810.21" y1="290.71" x2="801.28" y2="294.79" stroke="#14141c" stroke-width="1.7"/><line x1="810.51" y1="290.31" x2="810.51" y2="293.21" stroke="#14141c" stroke-width="1.0"/><line x1="856.35" y1="277.72" x2="846.90" y2="282.04" stroke="#e2e5ff" stroke-width="1.1"/><line x1="856.35" y1="276.22" x2="846.90" y2="280.54" stroke="#14141c" stroke-width="1.7"/><line x1="856.65" y1="275.82" x2="856.65" y2="278.72" stroke="#14141c" stroke-width="1.0"/><line x1="843.41" y1="283.64" x2="833.96" y2="287.96" stroke="#e2e5ff" stroke-width="1.1"/><line x1="843.41" y1="282.14" x2="833.96" y2="286.46" stroke="#14141c" stroke-width="1.7"/><line x1="843.71" y1="281.74" x2="843.71" y2="284.64" stroke="#14141c" stroke-width="1.0"/><line x1="830.47" y1="289.55" x2="821.02" y2="293.87" stroke="#e2e5ff" stroke-width="1.1"/><line x1="830.47" y1="288.05" x2="821.02" y2="292.37" stroke="#14141c" stroke-width="1.7"/><line x1="830.77" y1="287.65" x2="830.77" y2="290.55" stroke="#14141c" stroke-width="1.0"/><line x1="817.53" y1="295.47" x2="808.60" y2="299.55" stroke="#e2e5ff" stroke-width="1.1"/><line x1="817.53" y1="293.97" x2="808.60" y2="298.05" stroke="#14141c" stroke-width="1.7"/><line x1="817.83" y1="293.57" x2="817.83" y2="296.47" stroke="#14141c" stroke-width="1.0"/><line x1="818.97" y1="303.37" x2="818.97" y2="297.37" stroke="#444" stroke-width="0.9"/><polygon points="714.94,303.74 767.21,327.03 715.45,350.69 663.18,327.40" fill="#bcc0ec"/><polygon points="673.53,322.67 725.80,345.96 715.45,350.69 663.18,327.40" fill="#ededed"/><polygon points="679.17,325.18 684.66,327.62 678.96,330.23" fill="#c4c7ef"/><polygon points="686.48,328.44 691.97,330.88 686.28,333.49" fill="#c4c7ef"/><polygon points="693.80,331.70 699.29,334.15 693.60,336.75" fill="#c4c7ef"/><polygon points="701.12,334.96 706.61,337.41 700.91,340.01" fill="#c4c7ef"/><polygon points="708.44,338.22 713.93,340.67 708.23,343.27" fill="#c4c7ef"/><polygon points="715.76,341.48 721.24,343.93 715.55,346.53" fill="#c4c7ef"/><polygon points="758.85,323.30 767.21,327.03 715.45,350.69 707.09,346.96" fill="#cacacc"/><polygon points="758.59,323.19 749.79,327.21 764.60,325.87" fill="#bcc0ec"/><polygon points="745.65,329.10 736.85,333.12 751.66,331.78" fill="#bcc0ec"/><polygon points="732.71,335.02 723.91,339.04 738.72,337.70" fill="#bcc0ec"/><polygon points="719.77,340.93 710.97,344.95 725.78,343.61" fill="#bcc0ec"/><line x1="702.00" y1="309.65" x2="745.91" y2="329.22" stroke="#1e1e28" stroke-width="1.1"/><line x1="689.06" y1="315.57" x2="732.97" y2="335.13" stroke="#1e1e28" stroke-width="1.1"/><line x1="676.12" y1="321.48" x2="720.03" y2="341.05" stroke="#1e1e28" stroke-width="1.1"/><line x1="725.92" y1="308.63" x2="684.51" y2="327.56" stroke="#2a2a36" stroke-width="0.7"/><line x1="736.89" y1="313.52" x2="695.49" y2="332.45" stroke="#2a2a36" stroke-width="0.7"/><line x1="747.87" y1="318.41" x2="706.46" y2="337.34" stroke="#2a2a36" stroke-width="0.7"/><line x1="716.24" y1="308.74" x2="706.80" y2="313.06" stroke="#e2e5ff" stroke-width="1.1"/><line x1="716.24" y1="307.24" x2="706.80" y2="311.56" stroke="#14141c" stroke-width="1.7"/><line x1="716.54" y1="306.84" x2="716.54" y2="309.74" stroke="#14141c" stroke-width="1.0"/><line x1="703.30" y1="314.66" x2="693.86" y2="318.97" stroke="#e2e5ff" stroke-width="1.1"/><line x1="703.30" y1="313.16" x2="693.86" y2="317.47" stroke="#14141c" stroke-width="1.7"/><line x1="703.60" y1="312.76" x2="703.60" y2="315.66" stroke="#14141c" stroke-width="1.0"/><line x1="690.36" y1="320.57" x2="680.92" y2="324.89" stroke="#e2e5ff" stroke-width="1.1"/><line x1="690.36" y1="319.07" x2="680.92" y2="323.39" stroke="#14141c" stroke-width="1.7"/><line x1="690.66" y1="318.67" x2="690.66" y2="321.57" stroke="#14141c" stroke-width="1.0"/><line x1="677.42" y1="326.49" x2="668.49" y2="330.57" stroke="#e2e5ff" stroke-width="1.1"/><line x1="677.42" y1="324.99" x2="668.49" y2="329.07" stroke="#14141c" stroke-width="1.7"/><line x1="677.72" y1="324.59" x2="677.72" y2="327.49" stroke="#14141c" stroke-width="1.0"/><line x1="723.56" y1="312.00" x2="714.11" y2="316.32" stroke="#e2e5ff" stroke-width="1.1"/><line x1="723.56" y1="310.50" x2="714.11" y2="314.82" stroke="#14141c" stroke-width="1.7"/><line x1="723.86" y1="310.10" x2="723.86" y2="313.00" stroke="#14141c" stroke-width="1.0"/><line x1="710.62" y1="317.92" x2="701.17" y2="322.23" stroke="#e2e5ff" stroke-width="1.1"/><line x1="710.62" y1="316.42" x2="701.17" y2="320.73" stroke="#14141c" stroke-width="1.7"/><line x1="710.92" y1="316.02" x2="710.92" y2="318.92" stroke="#14141c" stroke-width="1.0"/><line x1="697.68" y1="323.83" x2="688.23" y2="328.15" stroke="#e2e5ff" stroke-width="1.1"/><line x1="697.68" y1="322.33" x2="688.23" y2="326.65" stroke="#14141c" stroke-width="1.7"/><line x1="697.98" y1="321.93" x2="697.98" y2="324.83" stroke="#14141c" stroke-width="1.0"/><line x1="684.74" y1="329.75" x2="675.81" y2="333.83" stroke="#e2e5ff" stroke-width="1.1"/><line x1="684.74" y1="328.25" x2="675.81" y2="332.33" stroke="#14141c" stroke-width="1.7"/><line x1="685.04" y1="327.85" x2="685.04" y2="330.75" stroke="#14141c" stroke-width="1.0"/><line x1="730.88" y1="315.26" x2="721.43" y2="319.58" stroke="#e2e5ff" stroke-width="1.1"/><line x1="730.88" y1="313.76" x2="721.43" y2="318.08" stroke="#14141c" stroke-width="1.7"/><line x1="731.18" y1="313.36" x2="731.18" y2="316.26" stroke="#14141c" stroke-width="1.0"/><line x1="717.94" y1="321.18" x2="708.49" y2="325.49" stroke="#e2e5ff" stroke-width="1.1"/><line x1="717.94" y1="319.68" x2="708.49" y2="323.99" stroke="#14141c" stroke-width="1.7"/><line x1="718.24" y1="319.28" x2="718.24" y2="322.18" stroke="#14141c" stroke-width="1.0"/><line x1="705.00" y1="327.09" x2="695.55" y2="331.41" stroke="#e2e5ff" stroke-width="1.1"/><line x1="705.00" y1="325.59" x2="695.55" y2="329.91" stroke="#14141c" stroke-width="1.7"/><line x1="705.30" y1="325.19" x2="705.30" y2="328.09" stroke="#14141c" stroke-width="1.0"/><line x1="692.06" y1="333.01" x2="683.13" y2="337.09" stroke="#e2e5ff" stroke-width="1.1"/><line x1="692.06" y1="331.51" x2="683.13" y2="335.59" stroke="#14141c" stroke-width="1.7"/><line x1="692.36" y1="331.11" x2="692.36" y2="334.01" stroke="#14141c" stroke-width="1.0"/><line x1="738.20" y1="318.52" x2="728.75" y2="322.84" stroke="#e2e5ff" stroke-width="1.1"/><line x1="738.20" y1="317.02" x2="728.75" y2="321.34" stroke="#14141c" stroke-width="1.7"/><line x1="738.50" y1="316.62" x2="738.50" y2="319.52" stroke="#14141c" stroke-width="1.0"/><line x1="725.26" y1="324.44" x2="715.81" y2="328.76" stroke="#e2e5ff" stroke-width="1.1"/><line x1="725.26" y1="322.94" x2="715.81" y2="327.26" stroke="#14141c" stroke-width="1.7"/><line x1="725.56" y1="322.54" x2="725.56" y2="325.44" stroke="#14141c" stroke-width="1.0"/><line x1="712.32" y1="330.35" x2="702.87" y2="334.67" stroke="#e2e5ff" stroke-width="1.1"/><line x1="712.32" y1="328.85" x2="702.87" y2="333.17" stroke="#14141c" stroke-width="1.7"/><line x1="712.62" y1="328.45" x2="712.62" y2="331.35" stroke="#14141c" stroke-width="1.0"/><line x1="699.38" y1="336.27" x2="690.45" y2="340.35" stroke="#e2e5ff" stroke-width="1.1"/><line x1="699.38" y1="334.77" x2="690.45" y2="338.85" stroke="#14141c" stroke-width="1.7"/><line x1="699.68" y1="334.37" x2="699.68" y2="337.27" stroke="#14141c" stroke-width="1.0"/><line x1="745.51" y1="321.78" x2="736.07" y2="326.10" stroke="#e2e5ff" stroke-width="1.1"/><line x1="745.51" y1="320.28" x2="736.07" y2="324.60" stroke="#14141c" stroke-width="1.7"/><line x1="745.81" y1="319.88" x2="745.81" y2="322.78" stroke="#14141c" stroke-width="1.0"/><line x1="732.57" y1="327.70" x2="723.13" y2="332.02" stroke="#e2e5ff" stroke-width="1.1"/><line x1="732.57" y1="326.20" x2="723.13" y2="330.52" stroke="#14141c" stroke-width="1.7"/><line x1="732.87" y1="325.80" x2="732.87" y2="328.70" stroke="#14141c" stroke-width="1.0"/><line x1="719.63" y1="333.61" x2="710.19" y2="337.93" stroke="#e2e5ff" stroke-width="1.1"/><line x1="719.63" y1="332.11" x2="710.19" y2="336.43" stroke="#14141c" stroke-width="1.7"/><line x1="719.93" y1="331.71" x2="719.93" y2="334.61" stroke="#14141c" stroke-width="1.0"/><line x1="706.69" y1="339.53" x2="697.76" y2="343.61" stroke="#e2e5ff" stroke-width="1.1"/><line x1="706.69" y1="338.03" x2="697.76" y2="342.11" stroke="#14141c" stroke-width="1.7"/><line x1="706.99" y1="337.63" x2="706.99" y2="340.53" stroke="#14141c" stroke-width="1.0"/><line x1="752.83" y1="325.04" x2="743.38" y2="329.36" stroke="#e2e5ff" stroke-width="1.1"/><line x1="752.83" y1="323.54" x2="743.38" y2="327.86" stroke="#14141c" stroke-width="1.7"/><line x1="753.13" y1="323.14" x2="753.13" y2="326.04" stroke="#14141c" stroke-width="1.0"/><line x1="739.89" y1="330.96" x2="730.44" y2="335.28" stroke="#e2e5ff" stroke-width="1.1"/><line x1="739.89" y1="329.46" x2="730.44" y2="333.78" stroke="#14141c" stroke-width="1.7"/><line x1="740.19" y1="329.06" x2="740.19" y2="331.96" stroke="#14141c" stroke-width="1.0"/><line x1="726.95" y1="336.87" x2="717.50" y2="341.19" stroke="#e2e5ff" stroke-width="1.1"/><line x1="726.95" y1="335.37" x2="717.50" y2="339.69" stroke="#14141c" stroke-width="1.7"/><line x1="727.25" y1="334.97" x2="727.25" y2="337.87" stroke="#14141c" stroke-width="1.0"/><line x1="714.01" y1="342.79" x2="705.08" y2="346.87" stroke="#e2e5ff" stroke-width="1.1"/><line x1="714.01" y1="341.29" x2="705.08" y2="345.37" stroke="#14141c" stroke-width="1.7"/><line x1="714.31" y1="340.89" x2="714.31" y2="343.79" stroke="#14141c" stroke-width="1.0"/><line x1="715.45" y1="350.69" x2="715.45" y2="344.69" stroke="#444" stroke-width="0.9"/><polygon points="611.42,351.06 663.69,374.35 611.93,398.01 559.66,374.72" fill="#bcc0ec"/><polygon points="570.01,369.99 622.28,393.28 611.93,398.01 559.66,374.72" fill="#ededed"/><polygon points="575.65,372.50 581.14,374.94 575.44,377.55" fill="#c4c7ef"/><polygon points="582.96,375.76 588.45,378.20 582.76,380.81" fill="#c4c7ef"/><polygon points="590.28,379.02 595.77,381.47 590.08,384.07" fill="#c4c7ef"/><polygon points="597.60,382.28 603.09,384.73 597.39,387.33" fill="#c4c7ef"/><polygon points="604.92,385.54 610.41,387.99 604.71,390.59" fill="#c4c7ef"/><polygon points="612.24,388.80 617.72,391.25 612.03,393.85" fill="#c4c7ef"/><polygon points="655.33,370.62 663.69,374.35 611.93,398.01 603.57,394.28" fill="#cacacc"/><polygon points="655.07,370.51 646.27,374.53 661.08,373.19" fill="#bcc0ec"/><polygon points="642.13,376.42 633.33,380.44 648.14,379.10" fill="#bcc0ec"/><polygon points="629.19,382.34 620.39,386.36 635.20,385.02" fill="#bcc0ec"/><polygon points="616.25,388.25 607.45,392.27 622.26,390.93" fill="#bcc0ec"/><line x1="598.48" y1="356.97" x2="642.39" y2="376.54" stroke="#1e1e28" stroke-width="1.1"/><line x1="585.54" y1="362.89" x2="629.45" y2="382.45" stroke="#1e1e28" stroke-width="1.1"/><line x1="572.60" y1="368.80" x2="616.51" y2="388.37" stroke="#1e1e28" stroke-width="1.1"/><line x1="622.40" y1="355.95" x2="580.99" y2="374.88" stroke="#2a2a36" stroke-width="0.7"/><line x1="633.37" y1="360.84" x2="591.97" y2="379.77" stroke="#2a2a36" stroke-width="0.7"/><line x1="644.35" y1="365.73" x2="602.94" y2="384.66" stroke="#2a2a36" stroke-width="0.7"/><line x1="612.72" y1="356.06" x2="603.28" y2="360.38" stroke="#e2e5ff" stroke-width="1.1"/><line x1="612.72" y1="354.56" x2="603.28" y2="358.88" stroke="#14141c" stroke-width="1.7"/><line x1="613.02" y1="354.16" x2="613.02" y2="357.06" stroke="#14141c" stroke-width="1.0"/><line x1="599.78" y1="361.98" x2="590.34" y2="366.29" stroke="#e2e5ff" stroke-width="1.1"/><line x1="599.78" y1="360.48" x2="590.34" y2="364.79" stroke="#14141c" stroke-width="1.7"/><line x1="600.08" y1="360.08" x2="600.08" y2="362.98" stroke="#14141c" stroke-width="1.0"/><line x1="586.84" y1="367.89" x2="577.40" y2="372.21" stroke="#e2e5ff" stroke-width="1.1"/><line x1="586.84" y1="366.39" x2="577.40" y2="370.71" stroke="#14141c" stroke-width="1.7"/><line x1="587.14" y1="365.99" x2="587.14" y2="368.89" stroke="#14141c" stroke-width="1.0"/><line x1="573.90" y1="373.81" x2="564.97" y2="377.89" stroke="#e2e5ff" stroke-width="1.1"/><line x1="573.90" y1="372.31" x2="564.97" y2="376.39" stroke="#14141c" stroke-width="1.7"/><line x1="574.20" y1="371.91" x2="574.20" y2="374.81" stroke="#14141c" stroke-width="1.0"/><line x1="620.04" y1="359.32" x2="610.59" y2="363.64" stroke="#e2e5ff" stroke-width="1.1"/><line x1="620.04" y1="357.82" x2="610.59" y2="362.14" stroke="#14141c" stroke-width="1.7"/><line x1="620.34" y1="357.42" x2="620.34" y2="360.32" stroke="#14141c" stroke-width="1.0"/><line x1="607.10" y1="365.24" x2="597.65" y2="369.55" stroke="#e2e5ff" stroke-width="1.1"/><line x1="607.10" y1="363.74" x2="597.65" y2="368.05" stroke="#14141c" stroke-width="1.7"/><line x1="607.40" y1="363.34" x2="607.40" y2="366.24" stroke="#14141c" stroke-width="1.0"/><line x1="594.16" y1="371.15" x2="584.71" y2="375.47" stroke="#e2e5ff" stroke-width="1.1"/><line x1="594.16" y1="369.65" x2="584.71" y2="373.97" stroke="#14141c" stroke-width="1.7"/><line x1="594.46" y1="369.25" x2="594.46" y2="372.15" stroke="#14141c" stroke-width="1.0"/><line x1="581.22" y1="377.07" x2="572.29" y2="381.15" stroke="#e2e5ff" stroke-width="1.1"/><line x1="581.22" y1="375.57" x2="572.29" y2="379.65" stroke="#14141c" stroke-width="1.7"/><line x1="581.52" y1="375.17" x2="581.52" y2="378.07" stroke="#14141c" stroke-width="1.0"/><line x1="627.36" y1="362.58" x2="617.91" y2="366.90" stroke="#e2e5ff" stroke-width="1.1"/><line x1="627.36" y1="361.08" x2="617.91" y2="365.40" stroke="#14141c" stroke-width="1.7"/><line x1="627.66" y1="360.68" x2="627.66" y2="363.58" stroke="#14141c" stroke-width="1.0"/><line x1="614.42" y1="368.50" x2="604.97" y2="372.81" stroke="#e2e5ff" stroke-width="1.1"/><line x1="614.42" y1="367.00" x2="604.97" y2="371.31" stroke="#14141c" stroke-width="1.7"/><line x1="614.72" y1="366.60" x2="614.72" y2="369.50" stroke="#14141c" stroke-width="1.0"/><line x1="601.48" y1="374.41" x2="592.03" y2="378.73" stroke="#e2e5ff" stroke-width="1.1"/><line x1="601.48" y1="372.91" x2="592.03" y2="377.23" stroke="#14141c" stroke-width="1.7"/><line x1="601.78" y1="372.51" x2="601.78" y2="375.41" stroke="#14141c" stroke-width="1.0"/><line x1="588.54" y1="380.33" x2="579.61" y2="384.41" stroke="#e2e5ff" stroke-width="1.1"/><line x1="588.54" y1="378.83" x2="579.61" y2="382.91" stroke="#14141c" stroke-width="1.7"/><line x1="588.84" y1="378.43" x2="588.84" y2="381.33" stroke="#14141c" stroke-width="1.0"/><line x1="634.68" y1="365.84" x2="625.23" y2="370.16" stroke="#e2e5ff" stroke-width="1.1"/><line x1="634.68" y1="364.34" x2="625.23" y2="368.66" stroke="#14141c" stroke-width="1.7"/><line x1="634.98" y1="363.94" x2="634.98" y2="366.84" stroke="#14141c" stroke-width="1.0"/><line x1="621.74" y1="371.76" x2="612.29" y2="376.08" stroke="#e2e5ff" stroke-width="1.1"/><line x1="621.74" y1="370.26" x2="612.29" y2="374.58" stroke="#14141c" stroke-width="1.7"/><line x1="622.04" y1="369.86" x2="622.04" y2="372.76" stroke="#14141c" stroke-width="1.0"/><line x1="608.80" y1="377.67" x2="599.35" y2="381.99" stroke="#e2e5ff" stroke-width="1.1"/><line x1="608.80" y1="376.17" x2="599.35" y2="380.49" stroke="#14141c" stroke-width="1.7"/><line x1="609.10" y1="375.77" x2="609.10" y2="378.67" stroke="#14141c" stroke-width="1.0"/><line x1="595.86" y1="383.59" x2="586.93" y2="387.67" stroke="#e2e5ff" stroke-width="1.1"/><line x1="595.86" y1="382.09" x2="586.93" y2="386.17" stroke="#14141c" stroke-width="1.7"/><line x1="596.16" y1="381.69" x2="596.16" y2="384.59" stroke="#14141c" stroke-width="1.0"/><line x1="641.99" y1="369.10" x2="632.55" y2="373.42" stroke="#e2e5ff" stroke-width="1.1"/><line x1="641.99" y1="367.60" x2="632.55" y2="371.92" stroke="#14141c" stroke-width="1.7"/><line x1="642.29" y1="367.20" x2="642.29" y2="370.10" stroke="#14141c" stroke-width="1.0"/><line x1="629.05" y1="375.02" x2="619.61" y2="379.34" stroke="#e2e5ff" stroke-width="1.1"/><line x1="629.05" y1="373.52" x2="619.61" y2="377.84" stroke="#14141c" stroke-width="1.7"/><line x1="629.35" y1="373.12" x2="629.35" y2="376.02" stroke="#14141c" stroke-width="1.0"/><line x1="616.11" y1="380.93" x2="606.67" y2="385.25" stroke="#e2e5ff" stroke-width="1.1"/><line x1="616.11" y1="379.43" x2="606.67" y2="383.75" stroke="#14141c" stroke-width="1.7"/><line x1="616.41" y1="379.03" x2="616.41" y2="381.93" stroke="#14141c" stroke-width="1.0"/><line x1="603.17" y1="386.85" x2="594.24" y2="390.93" stroke="#e2e5ff" stroke-width="1.1"/><line x1="603.17" y1="385.35" x2="594.24" y2="389.43" stroke="#14141c" stroke-width="1.7"/><line x1="603.47" y1="384.95" x2="603.47" y2="387.85" stroke="#14141c" stroke-width="1.0"/><line x1="649.31" y1="372.36" x2="639.86" y2="376.68" stroke="#e2e5ff" stroke-width="1.1"/><line x1="649.31" y1="370.86" x2="639.86" y2="375.18" stroke="#14141c" stroke-width="1.7"/><line x1="649.61" y1="370.46" x2="649.61" y2="373.36" stroke="#14141c" stroke-width="1.0"/><line x1="636.37" y1="378.28" x2="626.92" y2="382.60" stroke="#e2e5ff" stroke-width="1.1"/><line x1="636.37" y1="376.78" x2="626.92" y2="381.10" stroke="#14141c" stroke-width="1.7"/><line x1="636.67" y1="376.38" x2="636.67" y2="379.28" stroke="#14141c" stroke-width="1.0"/><line x1="623.43" y1="384.19" x2="613.98" y2="388.51" stroke="#e2e5ff" stroke-width="1.1"/><line x1="623.43" y1="382.69" x2="613.98" y2="387.01" stroke="#14141c" stroke-width="1.7"/><line x1="623.73" y1="382.29" x2="623.73" y2="385.19" stroke="#14141c" stroke-width="1.0"/><line x1="610.49" y1="390.11" x2="601.56" y2="394.19" stroke="#e2e5ff" stroke-width="1.1"/><line x1="610.49" y1="388.61" x2="601.56" y2="392.69" stroke="#14141c" stroke-width="1.7"/><line x1="610.79" y1="388.21" x2="610.79" y2="391.11" stroke="#14141c" stroke-width="1.0"/><line x1="611.93" y1="398.01" x2="611.93" y2="392.01" stroke="#444" stroke-width="0.9"/><line x1="442.74" y1="50.70" x2="100.09" y2="207.33" stroke="#000" stroke-width="1.65"/><line x1="495.01" y1="73.99" x2="152.36" y2="230.62" stroke="#000" stroke-width="1.65"/><line x1="547.28" y1="97.28" x2="204.63" y2="253.91" stroke="#000" stroke-width="1.65"/><line x1="599.55" y1="120.57" x2="256.90" y2="277.20" stroke="#000" stroke-width="1.65"/><line x1="651.82" y1="143.86" x2="309.17" y2="300.49" stroke="#000" stroke-width="1.65"/><line x1="704.09" y1="167.15" x2="361.44" y2="323.78" stroke="#000" stroke-width="1.65"/><line x1="756.36" y1="190.44" x2="413.71" y2="347.07" stroke="#000" stroke-width="1.65"/><line x1="808.63" y1="213.73" x2="465.98" y2="370.36" stroke="#000" stroke-width="1.65"/><line x1="860.90" y1="237.02" x2="518.25" y2="393.65" stroke="#000" stroke-width="1.65"/><line x1="913.17" y1="260.31" x2="570.52" y2="416.94" stroke="#000" stroke-width="1.65"/><line x1="373.64" y1="58.22" x2="894.77" y2="290.42" stroke="#000" stroke-width="1.65"/><line x1="321.88" y1="81.88" x2="843.01" y2="314.08" stroke="#000" stroke-width="1.65"/><line x1="270.12" y1="105.54" x2="791.25" y2="337.74" stroke="#000" stroke-width="1.65"/><line x1="218.36" y1="129.20" x2="739.49" y2="361.40" stroke="#000" stroke-width="1.65"/><line x1="166.60" y1="152.86" x2="687.73" y2="385.06" stroke="#000" stroke-width="1.65"/><line x1="114.84" y1="176.52" x2="635.97" y2="408.72" stroke="#000" stroke-width="1.65"/><polyline points="941.89,270.30 594.58,429.06 69.53,195.11" fill="none" stroke="#0c0c0c" stroke-width="1.8"/><polyline points="69.38,195.51 416.07,37.04 942.58,271.64" fill="none" stroke="#111" stroke-width="1.3"/><polyline points="71.10,196.28 416.08,38.59 940.87,272.42" fill="none" stroke="#ecebdf" stroke-width="1.4"/><polyline points="73.19,197.21 416.10,40.46 938.80,273.36" fill="none" stroke="#111" stroke-width="1.9"/><line x1="441.73" y1="49.41" x2="441.73" y2="45.71" stroke="#222" stroke-width="0.9"/><line x1="494.00" y1="72.70" x2="494.00" y2="69.00" stroke="#222" stroke-width="0.9"/><line x1="546.27" y1="95.99" x2="546.27" y2="92.29" stroke="#222" stroke-width="0.9"/><line x1="598.54" y1="119.28" x2="598.54" y2="115.58" stroke="#222" stroke-width="0.9"/><line x1="650.81" y1="142.57" x2="650.81" y2="138.87" stroke="#222" stroke-width="0.9"/><line x1="703.08" y1="165.86" x2="703.08" y2="162.16" stroke="#222" stroke-width="0.9"/><line x1="755.35" y1="189.15" x2="755.35" y2="185.45" stroke="#222" stroke-width="0.9"/><line x1="807.62" y1="212.44" x2="807.62" y2="208.74" stroke="#222" stroke-width="0.9"/><line x1="859.89" y1="235.73" x2="859.89" y2="232.03" stroke="#222" stroke-width="0.9"/><line x1="912.16" y1="259.02" x2="912.16" y2="255.32" stroke="#222" stroke-width="0.9"/><line x1="374.67" y1="56.89" x2="374.67" y2="53.19" stroke="#222" stroke-width="0.9"/><line x1="322.91" y1="80.55" x2="322.91" y2="76.85" stroke="#222" stroke-width="0.9"/><line x1="271.15" y1="104.21" x2="271.15" y2="100.51" stroke="#222" stroke-width="0.9"/><line x1="219.39" y1="127.87" x2="219.39" y2="124.17" stroke="#222" stroke-width="0.9"/><line x1="167.63" y1="151.53" x2="167.63" y2="147.83" stroke="#222" stroke-width="0.9"/><line x1="115.87" y1="175.19" x2="115.87" y2="171.49" stroke="#222" stroke-width="0.9"/><line x1="506.5" y1="234.1" x2="505.9" y2="205" stroke="#2020ff" stroke-width="1.4"/><polygon points="505.9,194.5 502.4,206 509.4,206" fill="#1010ff"/><line x1="506.5" y1="234.1" x2="533" y2="221.5" stroke="#10d010" stroke-width="1.2"/><polygon points="541,217 528.5,217.5 533.5,225.5" fill="#00e000"/><line x1="506.5" y1="234.1" x2="532" y2="245" stroke="#ff2020" stroke-width="1.2"/><polygon points="541,249.8 530,241 528,250" fill="#ff0000"/></svg><div id="tbline"></div><div class="tab"></div><div class="tbtn" style="left:45px;width:26px"></div><div class="tbtn" style="left:85px;width:26px"></div><div class="tbtn" style="left:115px;width:26px"></div><div class="tbtn" style="left:145px;width:25px"></div><div class="tbtn" style="left:175px;width:25px"></div><div class="tbtn" style="left:214px;width:26px"></div><div class="tbtn" style="left:254px;width:26px"></div><div class="tbtn" style="left:294px;width:26px"></div><div class="tbtn" style="left:324px;width:26px"></div><div class="rbtn" style="left:840px;width:22px"></div><div class="rbtn faded" style="left:872px;width:20px"></div><div class="rbtn faded" style="left:898px;width:20px"></div><div class="rbtn" style="left:954px;width:22px"></div><div class="rbtn" style="left:981px;width:22px"></div><svg width="1012" height="40" viewBox="0 436 1012 40" style="position:absolute;left:0;top:436px"><rect x="10.2" y="448.8" width="17.8" height="17.4" fill="#9c9c9c"/><rect x="10.35" y="448.95" width="2.45" height="2.4" fill="#555555"/><rect x="13.30" y="448.95" width="2.45" height="2.4" fill="#555555"/><rect x="16.25" y="448.95" width="2.45" height="2.4" fill="#555555"/><rect x="19.20" y="448.95" width="2.45" height="2.4" fill="#555555"/><rect x="22.15" y="448.95" width="2.45" height="2.4" fill="#555555"/><rect x="25.10" y="448.95" width="2.45" height="2.4" fill="#555555"/><rect x="10.35" y="451.85" width="2.45" height="2.4" fill="#555555"/><rect x="13.30" y="451.85" width="2.45" height="2.4" fill="#555555"/><rect x="16.25" y="451.85" width="2.45" height="2.4" fill="#555555"/><rect x="19.20" y="451.85" width="2.45" height="2.4" fill="#555555"/><rect x="22.15" y="451.85" width="2.45" height="2.4" fill="#555555"/><rect x="25.10" y="451.85" width="2.45" height="2.4" fill="#555555"/><rect x="10.35" y="454.75" width="2.45" height="2.4" fill="#555555"/><rect x="13.30" y="454.75" width="2.45" height="2.4" fill="#555555"/><rect x="16.25" y="454.75" width="2.45" height="2.4" fill="#555555"/><rect x="19.20" y="454.75" width="2.45" height="2.4" fill="#555555"/><rect x="22.15" y="454.75" width="2.45" height="2.4" fill="#555555"/><rect x="25.10" y="454.75" width="2.45" height="2.4" fill="#555555"/><rect x="10.35" y="457.65" width="2.45" height="2.4" fill="#555555"/><rect x="13.30" y="457.65" width="2.45" height="2.4" fill="#555555"/><rect x="16.25" y="457.65" width="2.45" height="2.4" fill="#555555"/><rect x="19.20" y="457.65" width="2.45" height="2.4" fill="#555555"/><rect x="22.15" y="457.65" width="2.45" height="2.4" fill="#555555"/><rect x="25.10" y="457.65" width="2.45" height="2.4" fill="#555555"/><rect x="10.35" y="460.55" width="2.45" height="2.4" fill="#555555"/><rect x="13.30" y="460.55" width="2.45" height="2.4" fill="#555555"/><rect x="16.25" y="460.55" width="2.45" height="2.4" fill="#555555"/><rect x="19.20" y="460.55" width="2.45" height="2.4" fill="#555555"/><rect x="22.15" y="460.55" width="2.45" height="2.4" fill="#555555"/><rect x="25.10" y="460.55" width="2.45" height="2.4" fill="#555555"/><rect x="10.35" y="463.45" width="2.45" height="2.4" fill="#555555"/><rect x="13.30" y="463.45" width="2.45" height="2.4" fill="#555555"/><rect x="16.25" y="463.45" width="2.45" height="2.4" fill="#555555"/><rect x="19.20" y="463.45" width="2.45" height="2.4" fill="#555555"/><rect x="22.15" y="463.45" width="2.45" height="2.4" fill="#555555"/><rect x="25.10" y="463.45" width="2.45" height="2.4" fill="#555555"/><polygon points="59.3,449.6 48.6,459.2 59,463.8 70.5,459.5" fill="#606264"/><polygon points="59.3,449.6 48.6,459.2 50.5,459.6 59.3,451.6 68.6,459.6 70.5,459.5" fill="#e8e8e8" stroke="#d04545" stroke-width="0.7"/><path d="M48.6 459.2 L59 463.8 L70.5 459.5" fill="none" stroke="#d04545" stroke-width="0.8"/><rect x="95.6" y="460" width="5.6" height="6.5" rx="1" fill="#6d6d6d" stroke="#333" stroke-width="0.8"/><circle cx="98.4" cy="453.4" r="6.8" fill="#f7ee74" stroke="#3a3a3a" stroke-width="0.9"/><rect x="96" y="466" width="4" height="1.6" fill="#111"/><circle cx="105.1" cy="463.3" r="4.6" fill="#fff" stroke="#111" stroke-width="1.2"/><path d="M102.5 463.3 H107.69999999999999 M105.1 460.7 V465.90000000000003" stroke="#111" stroke-width="1.3"/><path d="M123 457 C121 452 123.5 450 124.5 448 C125 450.5 126 451 127 446 C129 449 131 451 130.8 454 C132 452.5 132 451 132.8 450.5 C134 453 133.5 456 132 457 Z" fill="#f01c24"/><path d="M125.5 457 C125 454.5 126.5 453 127.2 451.5 C128 453 129.5 454.5 129 457 Z" fill="#f8d0d0"/><path d="M118.8 461.5 Q128 454.5 137.2 461.5 L136 463.8 Q128 458.2 120 463.8 Z" fill="#6e6e6e"/><path d="M121 465 Q128 459.8 135 465 L134 466.4 Q128 462.2 122 466.4 Z" fill="#777"/><rect x="124.8" y="466" width="6.5" height="2" fill="#6a6a6a"/><circle cx="135" cy="463.3" r="4.6" fill="#fff" stroke="#111" stroke-width="1.2"/><path d="M132.4 463.3 H137.6 M135 460.7 V465.90000000000003" stroke="#111" stroke-width="1.3"/><circle cx="154" cy="453.6" r="7" fill="#2cb0ea"/><line x1="156.51" y1="454.27" x2="159.40" y2="457.39" stroke="#e8e8e8" stroke-width="1.1"/><line x1="154.67" y1="456.11" x2="153.42" y2="460.17" stroke="#e8e8e8" stroke-width="1.1"/><line x1="152.16" y1="455.44" x2="148.02" y2="456.38" stroke="#e8e8e8" stroke-width="1.1"/><line x1="151.49" y1="452.93" x2="148.60" y2="449.81" stroke="#e8e8e8" stroke-width="1.1"/><line x1="153.33" y1="451.09" x2="154.58" y2="447.03" stroke="#e8e8e8" stroke-width="1.1"/><line x1="155.84" y1="451.76" x2="159.98" y2="450.82" stroke="#e8e8e8" stroke-width="1.1"/><circle cx="154" cy="453.6" r="2.2" fill="#2cb0ea"/><path d="M161.2 449.5 a2 2 0 0 1 4 0 V461 a3.3 3.3 0 1 1 -4 0 Z" fill="#7a7a7a" stroke="#111" stroke-width="1.2"/><circle cx="152.3" cy="463.4" r="4.6" fill="#fff" stroke="#111" stroke-width="1.2"/><path d="M149.70000000000002 463.4 H154.9 M152.3 460.79999999999995 V466.0" stroke="#111" stroke-width="1.3"/><polygon points="188.4,449.6 176.8,459 188,464 199.5,459" fill="#8a8c8e"/><path d="M188.4 449.6 L176.8 459 M188.4 449.6 L199.5 459 M188.4 449.6 V452" stroke="#777" stroke-width="0.6" fill="none"/><polygon points="176.8,459 188.4,452 199.5,459 188,464" fill="#8a8c8e"/><polygon points="179.6,458.3 182.6,456.7 185.6,458.3 182.6,459.90000000000003" fill="#f01010"/><polygon points="190.8,458.3 193.8,456.7 196.8,458.3 193.8,459.90000000000003" fill="#f01010"/><polygon points="181.5,461.7 184.5,460.09999999999997 187.5,461.7 184.5,463.3" fill="#f01010"/><polygon points="188.8,461.7 191.8,460.09999999999997 194.8,461.7 191.8,463.3" fill="#f01010"/><polygon points="221.00,456.30 223.70,456.30 235.70,449.80 233.00,449.80" fill="#fbfbfb" stroke="#3a3a3a" stroke-width="0.75" stroke-linejoin="round"/><polygon points="223.70,456.30 235.70,449.80 235.70,454.80 223.70,461.30" fill="#f2f2f2" stroke="#3a3a3a" stroke-width="0.75" stroke-linejoin="round"/><polygon points="223.70,461.30 227.30,461.30 239.30,454.80 235.70,454.80" fill="#fbfbfb" stroke="#3a3a3a" stroke-width="0.75" stroke-linejoin="round"/><polygon points="227.30,461.30 239.30,454.80 239.30,458.30 227.30,464.80" fill="#eeeeee" stroke="#3a3a3a" stroke-width="0.75" stroke-linejoin="round"/><polygon points="217.20,464.80 227.30,464.80 227.30,461.30 223.70,461.30 223.70,456.30 221.00,456.30 221.00,461.30 217.20,461.30" fill="#ffffff" stroke="#3a3a3a" stroke-width="0.75" stroke-linejoin="round"/><rect x="265" y="447" width="14.5" height="19" fill="#7c7c7c"/><rect x="257" y="454" width="9" height="12" fill="#7c7c7c"/><rect x="266.3" y="448.2" width="2.2" height="2.2" fill="#d8d8d8"/><rect x="269.6" y="448.2" width="2.2" height="2.2" fill="#d8d8d8"/><rect x="272.9" y="448.2" width="2.2" height="2.2" fill="#d8d8d8"/><rect x="276.2" y="448.2" width="2.2" height="2.2" fill="#d8d8d8"/><rect x="266.3" y="451.7" width="2.2" height="2.2" fill="#d8d8d8"/><rect x="269.6" y="451.7" width="2.2" height="2.2" fill="#d8d8d8"/><rect x="272.9" y="451.7" width="2.2" height="2.2" fill="#d8d8d8"/><rect x="276.2" y="451.7" width="2.2" height="2.2" fill="#d8d8d8"/><rect x="266.3" y="455.2" width="2.2" height="2.2" fill="#d8d8d8"/><rect x="269.6" y="455.2" width="2.2" height="2.2" fill="#d8d8d8"/><rect x="272.9" y="455.2" width="2.2" height="2.2" fill="#d8d8d8"/><rect x="276.2" y="455.2" width="2.2" height="2.2" fill="#d8d8d8"/><rect x="266.3" y="458.7" width="2.2" height="2.2" fill="#d8d8d8"/><rect x="269.6" y="458.7" width="2.2" height="2.2" fill="#d8d8d8"/><rect x="272.9" y="458.7" width="2.2" height="2.2" fill="#d8d8d8"/><rect x="276.2" y="458.7" width="2.2" height="2.2" fill="#d8d8d8"/><rect x="266.3" y="462.2" width="2.2" height="2.2" fill="#d8d8d8"/><rect x="269.6" y="462.2" width="2.2" height="2.2" fill="#d8d8d8"/><rect x="272.9" y="462.2" width="2.2" height="2.2" fill="#d8d8d8"/><rect x="276.2" y="462.2" width="2.2" height="2.2" fill="#d8d8d8"/><rect x="268.5" y="455" width="8.5" height="9.5" fill="#c2c2c2" stroke="#e02020" stroke-width="0.8"/><circle cx="262.6" cy="463.4" r="4.6" fill="#fff" stroke="#111" stroke-width="1.2"/><path d="M260.0 463.4 H265.20000000000005 M262.6 460.79999999999995 V466.0" stroke="#111" stroke-width="1.3"/><path d="M299 446 H312.5 L318 451.5 V468 H299 Z" fill="#fff" stroke="#000" stroke-width="1.6" stroke-linejoin="round"/><path d="M312.5 446 V451.5 H318 Z" fill="#000"/><path d="M301 466.5 L302 462.5 L312 452.5 L315.5 456 L305.5 466 Z" fill="#000"/><path d="M303.2 464.3 L313.2 454.3" stroke="#fff" stroke-width="0.7" stroke-dasharray="1 0.8"/><rect x="328.3" y="446.8" width="19.8" height="20" fill="#000"/><rect x="330.3" y="448.3" width="15.8" height="9.6" fill="#d2d2d2"/><rect x="336.2" y="460" width="5.8" height="5.5" fill="#b8b8b8"/><path d="M333 465.5 V460.5 H334.5" stroke="#ccc" stroke-width="0.8" fill="none"/><polygon points="846,454.2 849.5,450.5 859,450.5 855.5,454.2" fill="#fdf4ee" stroke="#000" stroke-width="0.9"/><polygon points="855.5,454.2 859,450.5 859,459.8 855.5,463.2" fill="#f4ece8" stroke="#000" stroke-width="0.9"/><rect x="846" y="454.2" width="9.5" height="9" fill="#f8dc50" stroke="#000" stroke-width="1.1"/><path d="M880 451.6 C884 448.5 888 450 888 454 C888 457 885 459 883 461" fill="none" stroke="#74a8dc" stroke-width="1.8"/><polygon points="877.2,449.5 877.2,456.5 884,456.5" fill="#74a8dc"/><path d="M912.5 451.6 C908.5 448.5 904.5 450 904.5 454 C904.5 457 907.5 459 909.5 461" fill="none" stroke="#74a8dc" stroke-width="1.8"/><polygon points="915.3,449.5 915.3,456.5 908.5,456.5" fill="#74a8dc"/><line x1="959.6" y1="460.8" x2="964.3" y2="456.8" stroke="#222" stroke-width="2.6" stroke-linecap="round"/><line x1="959.6" y1="460.8" x2="964.3" y2="456.8" stroke="#ccc" stroke-width="0.6" stroke-dasharray="0.8 0.8"/><circle cx="967.9" cy="452.3" r="4.6" fill="#e6f2f4" stroke="#4a96a8" stroke-width="1.3"/><path d="M965.4 451 a3 3 0 0 1 2.5 -2" stroke="#fff" stroke-width="0.8" fill="none"/><path d="M968.0 460.2 H974.3 M971.15 457.2 V463.3" stroke="#0a4cc4" stroke-width="1.8"/><line x1="986.8000000000001" y1="460.8" x2="991.5" y2="456.8" stroke="#222" stroke-width="2.6" stroke-linecap="round"/><line x1="986.8000000000001" y1="460.8" x2="991.5" y2="456.8" stroke="#ccc" stroke-width="0.6" stroke-dasharray="0.8 0.8"/><circle cx="995.1" cy="452.3" r="4.6" fill="#e6f2f4" stroke="#4a96a8" stroke-width="1.3"/><path d="M992.6 451 a3 3 0 0 1 2.5 -2" stroke="#fff" stroke-width="0.8" fill="none"/><path d="M995.1 460.2 H1001.1 " stroke="#0a4cc4" stroke-width="1.8"/></svg><div class="rad" style="left:26.8px;top:532.9px;width:11.0px;height:11.0px"></div><div class="t" style="left:42.60px;top:533.49px;font-size:11px;line-height:14px;color:#000;">Strip</div><div class="rad on" style="left:26.8px;top:553.8px;width:13.0px;height:13.0px;background:radial-gradient(circle,#fff 0,#fff 2.3px,#0a5db5 3.0px)"></div><div class="t" style="left:42.60px;top:553.39px;font-size:11px;line-height:14px;color:#000;">Suspended grid</div><div class="t" style="left:350.40px;top:492.99px;font-size:11px;line-height:14px;color:#000;">Grid width</div><div class="combo" style="left:349px;top:510px;width:103px;height:19px"></div><div class="t" style="left:354.60px;top:512.79px;font-size:11px;line-height:14px;color:#000;">600 mm</div><svg style="position:absolute;left:439.0px;top:517.5px" width="10" height="6"><path d="M0.5 0.5 L5 5 L9.5 0.5" fill="none" stroke="#333" stroke-width="1"/></svg><div class="t" style="left:350.40px;top:534.59px;font-size:11px;line-height:14px;color:#000;">Grid height</div><div class="combo" style="left:348px;top:551px;width:103px;height:19px"></div><div class="t" style="left:353.60px;top:553.99px;font-size:11px;line-height:14px;color:#000;">600 mm</div><svg style="position:absolute;left:438.0px;top:558.5px" width="10" height="6"><path d="M0.5 0.5 L5 5 L9.5 0.5" fill="none" stroke="#333" stroke-width="1"/></svg><div class="t" style="left:26.90px;top:592.69px;font-size:11px;line-height:14px;color:#000;">Angle of inclination</div><div class="combo" style="left:27px;top:611px;width:103px;height:19px"></div><div class="t" style="left:32.00px;top:613.79px;font-size:11px;line-height:14px;color:#000;">0°</div><svg style="position:absolute;left:117.0px;top:618.5px" width="10" height="6"><path d="M0.5 0.5 L5 5 L9.5 0.5" fill="none" stroke="#333" stroke-width="1"/></svg><div class="t" style="left:186.30px;top:592.69px;font-size:11px;line-height:14px;color:#000;">Direction of inclination</div><div class="combo" style="left:187px;top:611px;width:103px;height:19px"></div><div class="t" style="left:192.00px;top:613.79px;font-size:11px;line-height:14px;color:#000;">0°</div><svg style="position:absolute;left:277.0px;top:618.5px" width="10" height="6"><path d="M0.5 0.5 L5 5 L9.5 0.5" fill="none" stroke="#333" stroke-width="1"/></svg><div class="t" style="left:350.80px;top:592.99px;font-size:11px;line-height:14px;color:#000;">Direction</div><div class="combo" style="left:348px;top:611px;width:103px;height:19px"></div><div class="t" style="left:353.40px;top:613.79px;font-size:11px;line-height:14px;color:#000;">0°</div><svg style="position:absolute;left:438.0px;top:618.5px" width="10" height="6"><path d="M0.5 0.5 L5 5 L9.5 0.5" fill="none" stroke="#333" stroke-width="1"/></svg><div class="t" style="left:10.00px;top:668.19px;font-size:11px;line-height:14px;color:#000;">Type and distribution</div><div id="grp"></div><div id="grplegend"></div><div class="t" style="left:510.20px;top:494.39px;font-size:11px;line-height:14px;color:#000;">Distribution reference point within the area</div><div class="rad" style="left:513.9px;top:526.1px;width:10px;height:10px"></div><div class="rad" style="left:534.0px;top:526.1px;width:10px;height:10px"></div><div class="rad" style="left:553.0px;top:526.1px;width:10px;height:10px"></div><div class="rad" style="left:513.9px;top:545.8px;width:10px;height:10px"></div><div class="rad on" style="left:534.0px;top:545.8px;width:12px;height:12px;background:radial-gradient(circle,#fff 0,#fff 2.0px,#0a5db5 2.7px)"></div><div class="rad" style="left:553.0px;top:545.8px;width:10px;height:10px"></div><div class="rad" style="left:513.9px;top:565.0px;width:10px;height:10px"></div><div class="rad" style="left:534.0px;top:565.0px;width:10px;height:10px"></div><div class="rad" style="left:553.0px;top:565.0px;width:10px;height:10px"></div><div class="rad" style="left:686.8px;top:511.2px;width:11.0px;height:11.0px"></div><div class="t" style="left:703.00px;top:510.79px;font-size:11px;line-height:14px;color:#000;">Align to unit corner</div><div class="rad on" style="left:686.8px;top:534.1px;width:13.0px;height:13.0px;background:radial-gradient(circle,#fff 0,#fff 2.3px,#0a5db5 3.0px)"></div><div class="t" style="left:703.00px;top:533.89px;font-size:11px;line-height:14px;color:#000;">Align to unit center point</div><div class="t" style="left:714.50px;top:562.09px;font-size:11px;line-height:14px;color:#000;">Main runner offset</div><div class="combo" style="left:715px;top:579px;width:103px;height:19px"></div><div class="t" style="left:720.00px;top:582.19px;font-size:11px;line-height:14px;color:#000;">0 mm</div><svg style="position:absolute;left:805.0px;top:586.5px" width="10" height="6"><path d="M0.5 0.5 L5 5 L9.5 0.5" fill="none" stroke="#333" stroke-width="1"/></svg><div class="t" style="left:717.50px;top:605.29px;font-size:11px;line-height:14px;color:#000;">Cross runner offset</div><div class="combo" style="left:715px;top:621px;width:103px;height:19px"></div><div class="t" style="left:720.00px;top:624.19px;font-size:11px;line-height:14px;color:#000;">0 mm</div><svg style="position:absolute;left:805.0px;top:628.5px" width="10" height="6"><path d="M0.5 0.5 L5 5 L9.5 0.5" fill="none" stroke="#333" stroke-width="1"/></svg><div id="chk"><svg width="13" height="13" style="position:absolute;left:0;top:0"><path d="M3 6.5 L5.5 9 L10.5 3.8" fill="none" stroke="#fff" stroke-width="1.2"/></svg></div><div class="t" style="left:612.80px;top:670.99px;font-size:11px;line-height:14px;color:#000;">Automatic refresh on page</div><div class="pbtn" style="left:788px;width:22px"></div><div class="pbtn" style="left:821px;width:88px"></div><div class="t" style="left:857.60px;top:671.02px;font-size:11.5px;line-height:14px;color:#000;">OK</div><div class="pbtn" style="left:920px;width:88px"></div><div class="t" style="left:947.30px;top:671.12px;font-size:11.2px;line-height:14px;color:#000;">Cancel</div><svg width="1012" height="695" style="position:absolute;left:0;top:0;pointer-events:none"><path d="M317.1 519.6 V503.6" stroke="#3a3a3a" stroke-width="1.3"/><polygon points="314.5,505.1 317.1,501.0 319.70000000000005,505.1" fill="#3a3a3a"/><path d="M317.6 519.1 L326.6 510.1" stroke="#2a2a2a" stroke-width="1.3"/><polygon points="328.40000000000003,508.3 323.70000000000005,509.40000000000003 327.3,513.0" fill="#2a2a2a"/><path d="M317.1 519.6 H332.1" stroke="#e8302a" stroke-width="2.6"/><polygon points="331.1,515.6 338.3,519.6 331.1,523.6" fill="#e8302a"/><path d="M317.1 566.8 V551.8" stroke="#3a3a3a" stroke-width="1.3"/><polygon points="314.5,553.3 317.1,549.0 319.70000000000005,553.3" fill="#3a3a3a"/><path d="M317.1 566.8 H332.6" stroke="#3a3a3a" stroke-width="1.3"/><polygon points="331.6,564.1999999999999 335.90000000000003,566.8 331.6,569.4" fill="#3a3a3a"/><path d="M317.90000000000003 566.0 L327.1 556.8" stroke="#6cc04a" stroke-width="2.6"/><polygon points="331.1,552.8 323.70000000000005,554.5999999999999 329.3,560.1999999999999" fill="#6cc04a"/><path d="M688.6 597.3 V581.3" stroke="#3a3a3a" stroke-width="1.3"/><polygon points="686.0,582.8 688.6,578.6999999999999 691.2,582.8" fill="#3a3a3a"/><path d="M689.1 596.8 L698.1 587.8" stroke="#2a2a2a" stroke-width="1.3"/><polygon points="699.9,586.0 695.2,587.0999999999999 698.8000000000001,590.6999999999999" fill="#2a2a2a"/><path d="M688.6 597.3 H703.6" stroke="#e8302a" stroke-width="2.6"/><polygon points="702.6,593.3 709.8000000000001,597.3 702.6,601.3" fill="#e8302a"/><path d="M688.6 638.3 V623.3" stroke="#3a3a3a" stroke-width="1.3"/><polygon points="686.0,624.8 688.6,620.5 691.2,624.8" fill="#3a3a3a"/><path d="M688.6 638.3 H704.1" stroke="#3a3a3a" stroke-width="1.3"/><polygon points="703.1,635.6999999999999 707.4,638.3 703.1,640.9" fill="#3a3a3a"/><path d="M689.4 637.5 L698.6 628.3" stroke="#6cc04a" stroke-width="2.6"/><polygon points="702.6,624.3 695.2,626.0999999999999 700.8000000000001,631.6999999999999" fill="#6cc04a"/><path d="M795.2 673.6 A6 6 0 0 1 805.2 676.2" fill="none" stroke="#000" stroke-width="2"/><polygon points="802.4,676.6 808.6,675.8 805.2,681.2" fill="#000"/><path d="M804.6 682.4 A6 6 0 0 1 794.6 679.8" fill="none" stroke="#000" stroke-width="2"/><polygon points="797.4,679.4 791.2,680.2 793.8,674.6" fill="#000"/><path d="M1000 693 L1006 687 M1003.5 693 L1009.5 687 M1007 693 L1010.5 689.5" stroke="#b0b0b0" stroke-width="1"/></svg></body></html>
